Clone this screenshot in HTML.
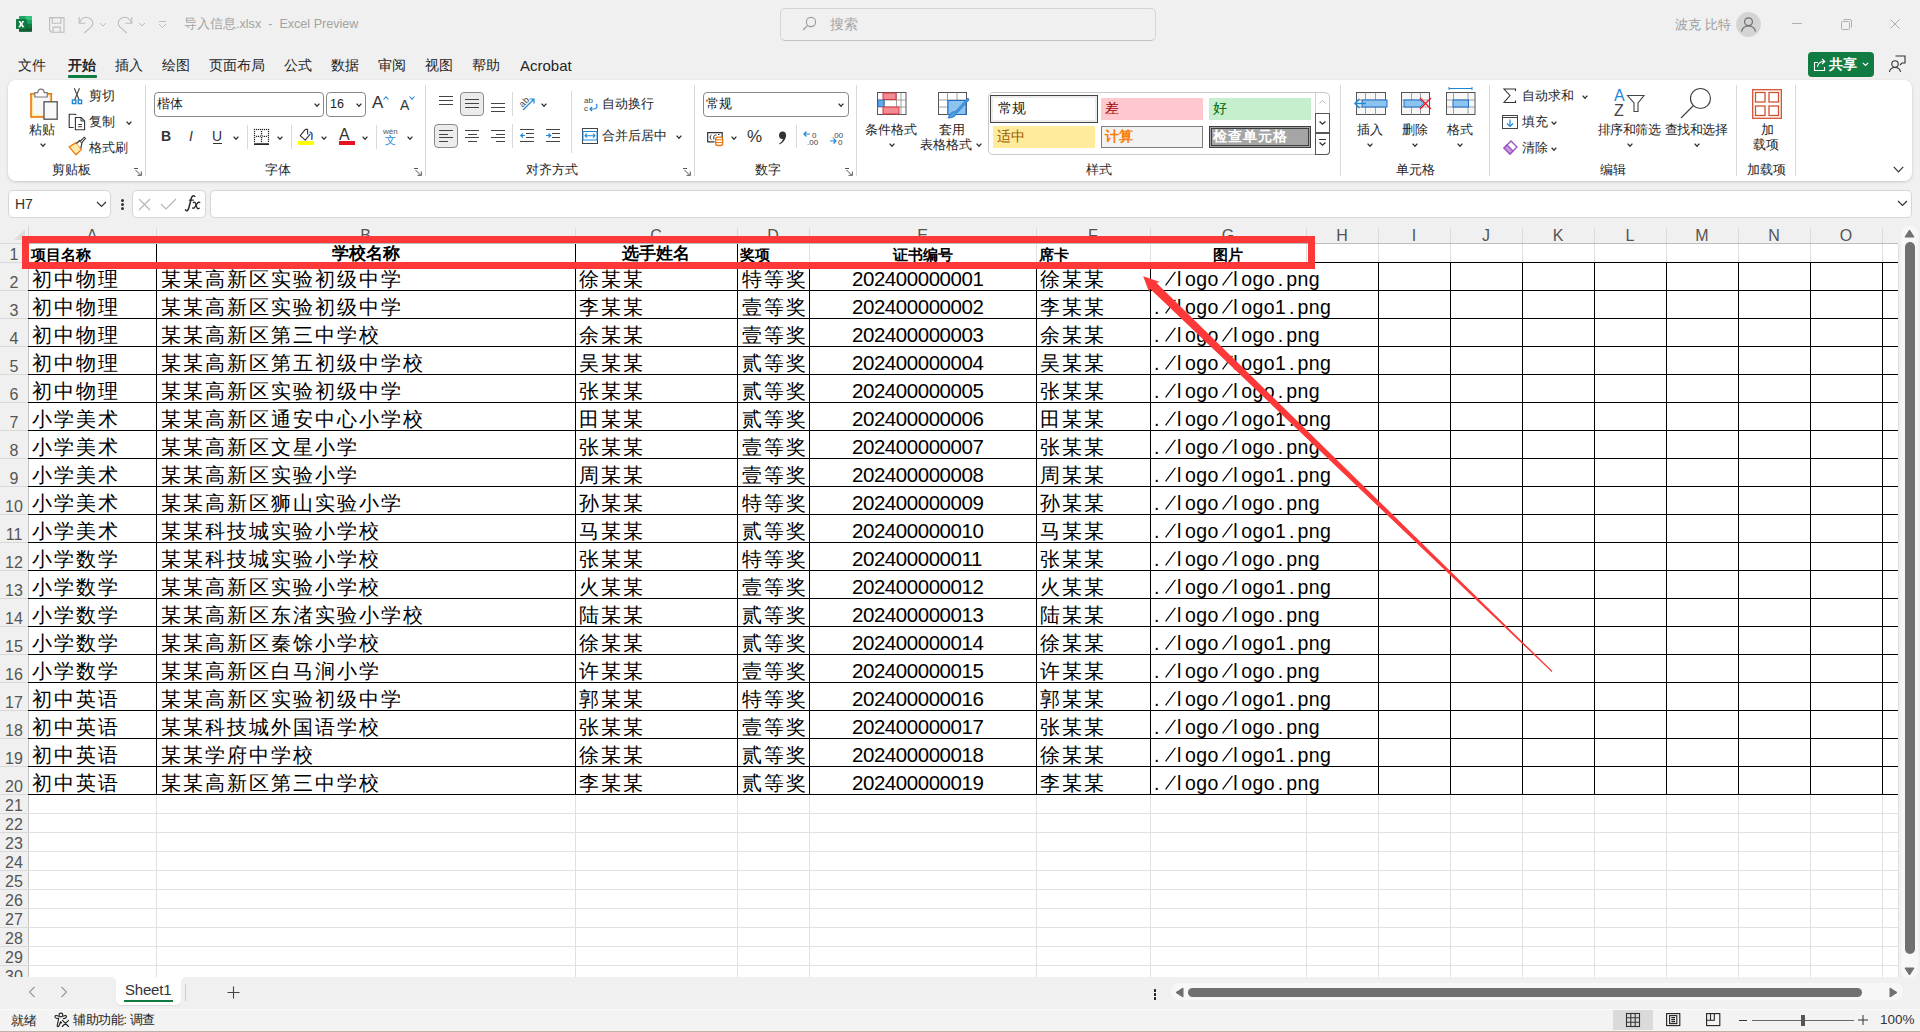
<!DOCTYPE html><html><head><meta charset="utf-8"><style>

*{box-sizing:border-box}
html,body{margin:0;padding:0}
body{width:1920px;height:1032px;overflow:hidden;background:#f0f0f0;position:relative;font-family:"Liberation Sans", sans-serif;color:#262626}
.a{position:absolute;white-space:nowrap}
.t{position:absolute;white-space:nowrap;line-height:1}
svg{position:absolute;overflow:visible}

</style></head><body>
<svg style="left:16px;top:16px" width="17" height="17" viewBox="0 0 17 17">
<rect x="3" y="0" width="13" height="15.7" rx="0.8" fill="#21a366"/>
<rect x="9.5" y="0" width="6.5" height="4" fill="#33c481"/>
<rect x="3" y="7.8" width="13" height="4" fill="#107c41"/>
<path d="M3 11.8 H16 V15 Q16 15.7 15.3 15.7 H3.8 Q3 15.7 3 15 Z" fill="#185c37"/>
<rect x="0" y="3" width="10.5" height="10" rx="0.6" fill="#107c41"/>
<rect x="10.5" y="4" width="0.8" height="9.8" fill="#0b5a2e" opacity="0.6"/>
<path d="M2.4 5 H4.4 L5.3 6.9 L6.2 5 H8.2 L6.4 8 L8.3 11.2 H6.2 L5.3 9.3 L4.3 11.2 H2.3 L4.2 8 Z" fill="#fff"/>
</svg>
<svg style="left:49px;top:17px" width="16" height="16" viewBox="0 0 16 16" fill="none" stroke="#bdbdbd" stroke-width="1.1"><path d="M0.6 0.6 H15 V15.2 H2.6 L0.6 13.2 Z"/><path d="M3.3 0.6 V6.3 H11.8 V0.6"/><path d="M4 15.2 V10.1 H11.3 V15.2"/></svg>
<svg style="left:78px;top:17px" width="17" height="17" viewBox="0 0 17 17" fill="none" stroke="#bdbdbd" stroke-width="1.1"><path d="M1.2 0 V6.3 H7.5"/><path d="M1.5 5.8 C3 2.2 5.5 0.3 8.3 0.3 C11.8 0.3 14.8 3 14.8 6.3 C14.8 7.8 14.2 8.8 13.2 9.9 L6.2 16"/></svg>
<svg style="left:99px;top:22px" width="8" height="5" viewBox="0 0 8 5" fill="none" stroke="#bdbdbd" stroke-width="1"><path d="M1 1 L4 4 L7 1"/></svg>
<svg style="left:117px;top:17px" width="17" height="17" viewBox="0 0 17 17" fill="none" stroke="#bdbdbd" stroke-width="1.1"><path d="M14.8 0 V6.3 H8.5"/><path d="M14.5 5.8 C13 2.2 10.5 0.3 7.7 0.3 C4.2 0.3 1.2 3 1.2 6.3 C1.2 7.8 1.8 8.8 2.8 9.9 L9.8 16"/></svg>
<svg style="left:138px;top:22px" width="8" height="5" viewBox="0 0 8 5" fill="none" stroke="#bdbdbd" stroke-width="1"><path d="M1 1 L4 4 L7 1"/></svg>
<svg style="left:158px;top:20px" width="9" height="9" viewBox="0 0 9 9" fill="none" stroke="#bdbdbd" stroke-width="1"><path d="M1 1.5 H8"/><path d="M1 4 L4.5 7.5 L8 4"/></svg>
<div class="t" style="left:184px;top:18px;font-size:12.6px;color:#a3a3a3">导入信息.xlsx&nbsp; - &nbsp;Excel Preview</div>
<div class="a" style="left:780px;top:8px;width:376px;height:33px;border:1px solid #d4d4d4;border-bottom-color:#c2c2c2;border-radius:5px;background:#f0f0f0"></div>
<svg style="left:802px;top:16px" width="15" height="15" viewBox="0 0 15 15" fill="none" stroke="#9a9a9a" stroke-width="1.1"><circle cx="9" cy="6" r="4.6"/><path d="M5.7 9.3 L1 14"/></svg>
<div class="t" style="left:830px;top:17px;font-size:14px;color:#a6a6a6">搜索</div>
<div class="t" style="left:1675px;top:18px;font-size:13px;color:#9d9d9d">波克 比特</div>
<svg style="left:1736px;top:12px" width="25" height="25" viewBox="0 0 25 25"><circle cx="12.5" cy="12.5" r="12.4" fill="#d4d4d4"/>
<circle cx="12.5" cy="9.8" r="3.9" fill="none" stroke="#6b6b6b" stroke-width="1.2"/><path d="M5.5 19.5 C6.5 15.5 9 14 12.5 14 C16 14 18.5 15.5 19.5 19.5" fill="none" stroke="#6b6b6b" stroke-width="1.2"/></svg>
<div class="a" style="left:1792px;top:23px;width:10px;height:1px;background:#b0b0b0"></div>
<svg style="left:1841px;top:19px" width="11" height="11" viewBox="0 0 11 11" fill="none" stroke="#b0b0b0" stroke-width="1"><rect x="0.5" y="2.5" width="8" height="8" rx="1"/><path d="M2.5 0.5 H9 Q10.5 0.5 10.5 2 V8.5"/></svg>
<svg style="left:1890px;top:19px" width="10" height="10" viewBox="0 0 10 10" fill="none" stroke="#b0b0b0" stroke-width="1"><path d="M0.5 0.5 L9.5 9.5 M9.5 0.5 L0.5 9.5"/></svg>
<div class="t" style="left:18px;top:58px;font-size:14px;font-weight:normal;color:#262626">文件</div>
<div class="t" style="left:68px;top:58px;font-size:14px;font-weight:bold;color:#262626">开始</div>
<div class="t" style="left:115px;top:58px;font-size:14px;font-weight:normal;color:#262626">插入</div>
<div class="t" style="left:162px;top:58px;font-size:14px;font-weight:normal;color:#262626">绘图</div>
<div class="t" style="left:209px;top:58px;font-size:14px;font-weight:normal;color:#262626">页面布局</div>
<div class="t" style="left:284px;top:58px;font-size:14px;font-weight:normal;color:#262626">公式</div>
<div class="t" style="left:331px;top:58px;font-size:14px;font-weight:normal;color:#262626">数据</div>
<div class="t" style="left:378px;top:58px;font-size:14px;font-weight:normal;color:#262626">审阅</div>
<div class="t" style="left:425px;top:58px;font-size:14px;font-weight:normal;color:#262626">视图</div>
<div class="t" style="left:472px;top:58px;font-size:14px;font-weight:normal;color:#262626">帮助</div>
<div class="t" style="left:520px;top:58px;font-size:15px;font-weight:normal;color:#262626">Acrobat</div>
<div class="a" style="left:68px;top:75px;width:29px;height:2.5px;background:#107c41;border-radius:1px"></div>
<div class="a" style="left:1808px;top:52px;width:66px;height:25px;background:#107c41;border-radius:4px"></div>
<svg style="left:1813px;top:57px" width="14" height="15" viewBox="0 0 14 15" fill="none" stroke="#fff" stroke-width="1.1"><path d="M5 5.5 H1.5 V13.5 H11.5 V10"/><path d="M4.5 10 C5 6.5 7.5 4.5 11 4.5"/><path d="M9 2 L11.8 4.5 L9 7"/></svg>
<div class="t" style="left:1829px;top:57px;font-size:14px;font-weight:bold;color:#fff">共享</div>
<svg style="left:1862px;top:62px" width="7" height="5" viewBox="0 0 7 5" fill="none" stroke="#fff" stroke-width="1.2"><path d="M0.8 0.8 L3.5 3.5 L6.2 0.8"/></svg>
<svg style="left:1888px;top:55px" width="18" height="18" viewBox="0 0 18 18" fill="none" stroke="#333" stroke-width="1.1"><path d="M7.5 1 H17 V8 H14 L12 10"/><circle cx="7" cy="9" r="3.2"/><path d="M1.5 17 C2 13.5 4 12.5 7 12.5 C10 12.5 12 13.5 12.5 17"/></svg>
<div class="a" style="left:8px;top:80px;width:1904px;height:101px;background:#fff;border-radius:8px;box-shadow:0 1px 3px rgba(0,0,0,0.17)"></div>
<svg style="left:24px;top:84px" width="40" height="40" viewBox="0 0 40 40">
<rect x="7" y="9.8" width="20.3" height="23.2" fill="#fdeaa6" stroke="#e8780c" stroke-width="1.6"/>
<rect x="9.3" y="12" width="15.8" height="18.8" fill="#f8f8f8"/>
<path d="M10.8 13 V8.6 H13.8 C14 6 15.5 5.2 17 5.2 C18.5 5.2 20 6 20.2 8.6 H23.2 V13 Z" fill="#fff" stroke="#777" stroke-width="1.2"/>
<rect x="20" y="17.8" width="13.2" height="17.4" fill="#f9f9f9" stroke="#505050" stroke-width="1.3"/>
</svg>
<div class="t" style="left:29px;top:123px;font-size:13px;color:#262626;">粘贴</div>
<svg style="left:40px;top:143px" width="6" height="4" viewBox="0 0 6 4" fill="none" stroke="#333" stroke-width="1.35"><path d="M0.6 0.6 L3.0 3.2 L5.4 0.6"/></svg>
<svg style="left:64px;top:84px" width="30" height="76" viewBox="0 0 30 76">
<path d="M10.3 4.2 L15.2 16 M15.5 4.2 L10.6 16" fill="none" stroke="#444" stroke-width="1.1"/>
<rect x="8.4" y="16" width="3.4" height="3.6" fill="#fff" stroke="#1e88d8" stroke-width="1.4"/>
<rect x="14.2" y="16" width="3.4" height="3.6" fill="#fff" stroke="#1e88d8" stroke-width="1.4"/>
<path d="M9.6 43.5 H5.2 V30.2 H11.4 L12.3 31.2" fill="none" stroke="#333" stroke-width="1.1"/>
<path d="M11.4 33.5 H17.2 L20.6 36.9 V45.7 H11.4 Z" fill="#fff" stroke="#333" stroke-width="1.1"/>
<path d="M17 33.5 V37 H20.6 M14.2 40.5 H18 M14.2 42.7 H18" fill="none" stroke="#333" stroke-width="1"/>
<path d="M5.2 62.8 L12.2 58.6 L17.6 65.4 L12 70.8 Z" fill="#fde9a8" stroke="#e8780c" stroke-width="1.3" stroke-linejoin="round"/>
<path d="M12.5 59.5 L15.5 56.5 L18 59 L16.8 64" fill="#fff" stroke="#333" stroke-width="1.1"/>
<path d="M16 57.5 L20.3 53.2 L21.5 54.5 L17.5 58.8" fill="#fff" stroke="#333" stroke-width="1.1"/>
</svg>
<div class="t" style="left:89px;top:89px;font-size:13px;color:#262626;">剪切</div>
<div class="t" style="left:89px;top:115px;font-size:13px;color:#262626;">复制</div>
<svg style="left:126px;top:121px" width="6" height="4" viewBox="0 0 6 4" fill="none" stroke="#333" stroke-width="1.35"><path d="M0.6 0.6 L3.0 3.2 L5.4 0.6"/></svg>
<div class="t" style="left:89px;top:141px;font-size:13px;color:#262626;">格式刷</div>
<div class="t" style="left:11px;width:120px;text-align:center;top:163px;font-size:13px;color:#262626;">剪贴板</div>
<svg style="left:134px;top:168px" width="8" height="8" viewBox="0 0 8 8" fill="none" stroke="#555" stroke-width="1"><path d="M0 0.5 H4 M1.5 2 L7 7.5 M7.3 3.5 V7.3 H3.5"/></svg>
<div class="a" style="left:145px;top:85px;width:1px;height:91px;background:#d9d9d9"></div>
<div class="a" style="left:154px;top:92px;width:170px;height:25px;border:1px solid #8a8a8a;border-radius:4px;background:#fff"></div>
<div class="t" style="left:157px;top:97px;font-size:13px;color:#262626;color:#222">楷体</div>
<svg style="left:314px;top:103px" width="6" height="4" viewBox="0 0 6 4" fill="none" stroke="#333" stroke-width="1.35"><path d="M0.6 0.6 L3.0 3.2 L5.4 0.6"/></svg>
<div class="a" style="left:326px;top:92px;width:40px;height:25px;border:1px solid #8a8a8a;border-radius:4px;background:#fff"></div>
<div class="t" style="left:330px;top:98px;font-size:13px;color:#262626;color:#222;font-size:12.5px">16</div>
<svg style="left:356px;top:103px" width="6" height="4" viewBox="0 0 6 4" fill="none" stroke="#333" stroke-width="1.35"><path d="M0.6 0.6 L3.0 3.2 L5.4 0.6"/></svg>
<div class="t" style="left:372px;top:94px;font-size:17px;color:#333">A</div>
<svg style="left:383px;top:96px" width="6" height="4" viewBox="0 0 6 4" fill="none" stroke="#1e88d8" stroke-width="1.1"><path d="M0.5 3.5 L3 0.8 L5.5 3.5"/></svg>
<div class="t" style="left:400px;top:98px;font-size:14px;color:#333">A</div>
<svg style="left:409px;top:96px" width="6" height="4" viewBox="0 0 6 4" fill="none" stroke="#1e88d8" stroke-width="1.1"><path d="M0.5 0.5 L3 3.2 L5.5 0.5"/></svg>
<div class="t" style="left:161px;top:129px;font-size:14px;font-weight:bold;color:#333">B</div>
<div class="t" style="left:189px;top:129px;font-size:14px;font-style:italic;color:#333">I</div>
<div class="t" style="left:212px;top:129px;font-size:14px;color:#333">U</div>
<div class="a" style="left:213px;top:143px;width:9px;height:1px;background:#333"></div>
<svg style="left:233px;top:136px" width="6" height="4" viewBox="0 0 6 4" fill="none" stroke="#333" stroke-width="1.35"><path d="M0.6 0.6 L3.0 3.2 L5.4 0.6"/></svg>
<div class="a" style="left:247px;top:125px;width:1px;height:24px;background:#d9d9d9"></div>
<svg style="left:250px;top:124px" width="22" height="22" viewBox="0 0 22 22"><rect x="3.9" y="4.9" width="1.2" height="1.2" fill="#222"/><rect x="5.9" y="4.9" width="1.2" height="1.2" fill="#222"/><rect x="7.9" y="4.9" width="1.2" height="1.2" fill="#222"/><rect x="9.9" y="4.9" width="1.2" height="1.2" fill="#222"/><rect x="11.9" y="4.9" width="1.2" height="1.2" fill="#222"/><rect x="13.9" y="4.9" width="1.2" height="1.2" fill="#222"/><rect x="15.9" y="4.9" width="1.2" height="1.2" fill="#222"/><rect x="17.9" y="4.9" width="1.2" height="1.2" fill="#222"/><rect x="3.9" y="6.9" width="1.2" height="1.2" fill="#222"/><rect x="17.9" y="6.9" width="1.2" height="1.2" fill="#222"/><rect x="3.9" y="8.9" width="1.2" height="1.2" fill="#222"/><rect x="17.9" y="8.9" width="1.2" height="1.2" fill="#222"/><rect x="3.9" y="10.9" width="1.2" height="1.2" fill="#222"/><rect x="17.9" y="10.9" width="1.2" height="1.2" fill="#222"/><rect x="3.9" y="12.9" width="1.2" height="1.2" fill="#222"/><rect x="17.9" y="12.9" width="1.2" height="1.2" fill="#222"/><rect x="3.9" y="14.9" width="1.2" height="1.2" fill="#222"/><rect x="17.9" y="14.9" width="1.2" height="1.2" fill="#222"/><rect x="3.9" y="16.9" width="1.2" height="1.2" fill="#222"/><rect x="17.9" y="16.9" width="1.2" height="1.2" fill="#222"/><rect x="10.9" y="6.9" width="1.2" height="1.2" fill="#222"/><rect x="10.9" y="8.9" width="1.2" height="1.2" fill="#222"/><rect x="10.9" y="12.9" width="1.2" height="1.2" fill="#222"/><rect x="10.9" y="14.9" width="1.2" height="1.2" fill="#222"/><rect x="10.9" y="16.9" width="1.2" height="1.2" fill="#222"/><rect x="5.9" y="11.8" width="1.2" height="1.2" fill="#222"/><rect x="7.9" y="11.8" width="1.2" height="1.2" fill="#222"/><rect x="13.9" y="11.8" width="1.2" height="1.2" fill="#222"/><rect x="15.9" y="11.8" width="1.2" height="1.2" fill="#222"/><path d="M11.5 10.8 L12.9 12.3 L11.5 13.7 L10.1 12.3 Z" fill="none" stroke="#222" stroke-width="0.8"/><rect x="4" y="19.3" width="15" height="1.6" fill="#111"/></svg>
<svg style="left:277px;top:136px" width="6" height="4" viewBox="0 0 6 4" fill="none" stroke="#333" stroke-width="1.35"><path d="M0.6 0.6 L3.0 3.2 L5.4 0.6"/></svg>
<div class="a" style="left:291px;top:125px;width:1px;height:24px;background:#d9d9d9"></div>
<svg style="left:298px;top:128px" width="17" height="18" viewBox="0 0 17 18"><path d="M7.4 1.4 L2.2 7.7 L7.2 12.2 L12.2 6.2 M7.4 1.4 H9.6 V6.6" fill="none" stroke="#333" stroke-width="1.1" stroke-linejoin="round"/><path d="M12.2 4.2 C13.6 4.4 14.3 6 14 8.2 L13.8 11.3" fill="none" stroke="#1e6fc8" stroke-width="1.6" stroke-linecap="round"/><rect x="0" y="13" width="16" height="4" fill="#ffff00"/></svg>
<svg style="left:321px;top:136px" width="6" height="4" viewBox="0 0 6 4" fill="none" stroke="#333" stroke-width="1.35"><path d="M0.6 0.6 L3.0 3.2 L5.4 0.6"/></svg>
<div class="t" style="left:339px;top:127px;font-size:16px;color:#333">A</div>
<div class="a" style="left:339px;top:141px;width:16px;height:4px;background:#e81123"></div>
<svg style="left:362px;top:136px" width="6" height="4" viewBox="0 0 6 4" fill="none" stroke="#333" stroke-width="1.35"><path d="M0.6 0.6 L3.0 3.2 L5.4 0.6"/></svg>
<div class="a" style="left:376px;top:125px;width:1px;height:24px;background:#d9d9d9"></div>
<div class="t" style="left:383px;top:128px;font-size:8px;color:#555">wén</div>
<div class="t" style="left:385px;top:135px;font-size:11px;color:#1e88d8">文</div>
<svg style="left:407px;top:136px" width="6" height="4" viewBox="0 0 6 4" fill="none" stroke="#333" stroke-width="1.35"><path d="M0.6 0.6 L3.0 3.2 L5.4 0.6"/></svg>
<div class="t" style="left:218px;width:120px;text-align:center;top:163px;font-size:13px;color:#262626;">字体</div>
<svg style="left:414px;top:168px" width="8" height="8" viewBox="0 0 8 8" fill="none" stroke="#555" stroke-width="1"><path d="M0 0.5 H4 M1.5 2 L7 7.5 M7.3 3.5 V7.3 H3.5"/></svg>
<div class="a" style="left:425px;top:85px;width:1px;height:91px;background:#d9d9d9"></div>
<div class="a" style="left:439px;top:96px;width:14px;height:1px;background:#444"></div>
<div class="a" style="left:439px;top:100px;width:14px;height:1px;background:#444"></div>
<div class="a" style="left:439px;top:104px;width:14px;height:1px;background:#444"></div>
<div class="a" style="left:460px;top:92px;width:24px;height:24px;background:#ececec;border:1px solid #8a8a8a;border-radius:4px"></div>
<div class="a" style="left:465px;top:99px;width:14px;height:1px;background:#444"></div>
<div class="a" style="left:465px;top:103px;width:14px;height:1px;background:#444"></div>
<div class="a" style="left:465px;top:107px;width:14px;height:1px;background:#444"></div>
<div class="a" style="left:491px;top:103px;width:14px;height:1px;background:#444"></div>
<div class="a" style="left:491px;top:107px;width:14px;height:1px;background:#444"></div>
<div class="a" style="left:491px;top:111px;width:14px;height:1px;background:#444"></div>
<div class="a" style="left:512px;top:92px;width:1px;height:24px;background:#d9d9d9"></div>
<svg style="left:519px;top:95px" width="17" height="17" viewBox="0 0 17 17"><text x="0" y="10" font-size="9" fill="#444" transform="rotate(-45 5 7)" font-family="Liberation Sans">ab</text><path d="M4 15 L15 4 M10.5 4 H15 V8.5" fill="none" stroke="#1e88d8" stroke-width="1.2"/></svg>
<svg style="left:541px;top:103px" width="6" height="4" viewBox="0 0 6 4" fill="none" stroke="#333" stroke-width="1.35"><path d="M0.6 0.6 L3.0 3.2 L5.4 0.6"/></svg>
<div class="a" style="left:571px;top:91px;width:1px;height:62px;background:#d9d9d9"></div>
<svg style="left:583px;top:96px" width="16" height="17" viewBox="0 0 16 17"><text x="1" y="7" font-size="8" fill="#444" font-family="Liberation Sans">ab</text><text x="1" y="15" font-size="8" fill="#444" font-family="Liberation Sans">c</text><path d="M13 8 C15 10 14 13 11 13 H7 M9 11 L7 13 L9 15" fill="none" stroke="#1e88d8" stroke-width="1.2"/></svg>
<div class="t" style="left:602px;top:97px;font-size:13px;color:#262626;">自动换行</div>
<div class="a" style="left:434px;top:124px;width:24px;height:24px;background:#ececec;border:1px solid #8a8a8a;border-radius:4px"></div>
<div class="a" style="left:439px;top:130.0px;width:14px;height:1px;background:#444"></div>
<div class="a" style="left:439px;top:133.7px;width:9px;height:1px;background:#444"></div>
<div class="a" style="left:439px;top:137.4px;width:14px;height:1px;background:#444"></div>
<div class="a" style="left:439px;top:141.1px;width:9px;height:1px;background:#444"></div>
<div class="a" style="left:465.0px;top:130.0px;width:14px;height:1px;background:#444"></div>
<div class="a" style="left:467.5px;top:133.7px;width:9px;height:1px;background:#444"></div>
<div class="a" style="left:465.0px;top:137.4px;width:14px;height:1px;background:#444"></div>
<div class="a" style="left:467.5px;top:141.1px;width:9px;height:1px;background:#444"></div>
<div class="a" style="left:491px;top:130.0px;width:14px;height:1px;background:#444"></div>
<div class="a" style="left:496px;top:133.7px;width:9px;height:1px;background:#444"></div>
<div class="a" style="left:491px;top:137.4px;width:14px;height:1px;background:#444"></div>
<div class="a" style="left:496px;top:141.1px;width:9px;height:1px;background:#444"></div>
<div class="a" style="left:512px;top:124px;width:1px;height:24px;background:#d9d9d9"></div>
<svg style="left:520px;top:129px" width="15" height="14" viewBox="0 0 15 14"><path d="M0 0.5 H14 M6 4.5 H14 M6 8.5 H14 M0 12.5 H14" stroke="#444" stroke-width="1"/><path d="M5 6.5 H0.8 M3 4.5 L0.8 6.5 L3 8.5" fill="none" stroke="#1e88d8" stroke-width="1.2"/></svg>
<svg style="left:546px;top:129px" width="15" height="14" viewBox="0 0 15 14"><path d="M0 0.5 H14 M6 4.5 H14 M6 8.5 H14 M0 12.5 H14" stroke="#444" stroke-width="1"/><path d="M0 6.5 H4.5 M2.5 4.5 L4.7 6.5 L2.5 8.5" fill="none" stroke="#1e88d8" stroke-width="1.2"/></svg>
<svg style="left:582px;top:128px" width="16" height="16" viewBox="0 0 16 16"><rect x="0.5" y="0.5" width="15" height="15" fill="none" stroke="#444" stroke-width="1"/><rect x="1" y="3.5" width="14" height="8.5" fill="#fff" stroke="#1e88d8" stroke-width="1"/><path d="M3 7.7 H13 M5 5.7 L3 7.7 L5 9.7 M11 5.7 L13 7.7 L11 9.7" fill="none" stroke="#1e88d8" stroke-width="1.1"/></svg>
<div class="t" style="left:602px;top:129px;font-size:13px;color:#262626;">合并后居中</div>
<svg style="left:676px;top:135px" width="6" height="4" viewBox="0 0 6 4" fill="none" stroke="#333" stroke-width="1.35"><path d="M0.6 0.6 L3.0 3.2 L5.4 0.6"/></svg>
<div class="t" style="left:492px;width:120px;text-align:center;top:163px;font-size:13px;color:#262626;">对齐方式</div>
<svg style="left:683px;top:168px" width="8" height="8" viewBox="0 0 8 8" fill="none" stroke="#555" stroke-width="1"><path d="M0 0.5 H4 M1.5 2 L7 7.5 M7.3 3.5 V7.3 H3.5"/></svg>
<div class="a" style="left:694px;top:85px;width:1px;height:91px;background:#d9d9d9"></div>
<div class="a" style="left:703px;top:92px;width:146px;height:25px;border:1px solid #8a8a8a;border-radius:4px;background:#fff"></div>
<div class="t" style="left:706px;top:97px;font-size:13px;color:#262626;color:#222">常规</div>
<svg style="left:838px;top:103px" width="6" height="4" viewBox="0 0 6 4" fill="none" stroke="#333" stroke-width="1.35"><path d="M0.6 0.6 L3.0 3.2 L5.4 0.6"/></svg>
<svg style="left:707px;top:132px" width="17" height="14" viewBox="0 0 17 14"><path d="M7.5 9.8 H0.7 V0.7 H15.2 V8" fill="none" stroke="#333" stroke-width="1.2"/><path d="M4.5 3 C2.8 3 2.6 7.5 4.5 7.5 M6.8 7.5 V4.5 C6.8 3 8.5 3 9.5 3 M11 2.5 H12.5" fill="none" stroke="#333" stroke-width="1"/><rect x="8.7" y="5.2" width="7" height="8.3" rx="2.2" fill="#fff" stroke="#e8780c" stroke-width="1.3"/><path d="M8.7 7.8 H15.7 M8.7 10.5 H15.7" stroke="#e8780c" stroke-width="1.1"/></svg>
<svg style="left:731px;top:136px" width="6" height="4" viewBox="0 0 6 4" fill="none" stroke="#333" stroke-width="1.35"><path d="M0.6 0.6 L3.0 3.2 L5.4 0.6"/></svg>
<div class="t" style="left:747px;top:128px;font-size:17px;color:#333">%</div>
<svg style="left:778px;top:131px" width="9" height="14" viewBox="0 0 9 14"><path d="M4.5 0.5 C7.5 0.5 8.5 3 8 5.5 C7.3 9 5 12 1.5 13.5 L1 12.8 C3.5 11 4.8 9.3 5 8 C2.5 8.3 1 6.7 1 4.5 C1 2 2.5 0.5 4.5 0.5 Z" fill="#333"/></svg>
<div class="a" style="left:796px;top:125px;width:1px;height:23px;background:#d9d9d9"></div>
<svg style="left:803px;top:130px" width="16" height="15" viewBox="0 0 16 15"><path d="M7 4 H1 M3.5 1.5 L1 4 L3.5 6.5" fill="none" stroke="#1e88d8" stroke-width="1.2"/><text x="9" y="7.5" font-size="8" fill="#444" font-family="Liberation Sans">0</text><text x="4" y="14.5" font-size="8" fill="#444" font-family="Liberation Sans">.00</text></svg>
<svg style="left:829px;top:130px" width="16" height="15" viewBox="0 0 16 15"><text x="3" y="7.5" font-size="8" fill="#444" font-family="Liberation Sans">.00</text><path d="M1 11 H7 M4.5 8.5 L7 11 L4.5 13.5" fill="none" stroke="#1e88d8" stroke-width="1.2"/><text x="9" y="14.5" font-size="8" fill="#444" font-family="Liberation Sans">0</text></svg>
<div class="t" style="left:708px;width:120px;text-align:center;top:163px;font-size:13px;color:#262626;">数字</div>
<svg style="left:845px;top:168px" width="8" height="8" viewBox="0 0 8 8" fill="none" stroke="#555" stroke-width="1"><path d="M0 0.5 H4 M1.5 2 L7 7.5 M7.3 3.5 V7.3 H3.5"/></svg>
<div class="a" style="left:856px;top:85px;width:1px;height:91px;background:#d9d9d9"></div>
<svg style="left:877px;top:92px" width="30" height="24" viewBox="0 0 30 24"><rect x="0.5" y="0.5" width="28.5" height="22" fill="#fff" stroke="#555"/>
<path d="M7.5 0.5 V23 M19.5 0.5 V23 M24 0.5 V23 M0.5 8 H29 M0.5 15 H29" stroke="#888" stroke-width="0.8"/>
<rect x="6" y="1" width="13" height="6.5" fill="#f38b95" stroke="#d9343f"/><rect x="1" y="8" width="6" height="6.5" fill="#62a8e6" stroke="#1e6fc8" stroke-width="0.8"/><rect x="6" y="15" width="16" height="7" fill="#f38b95" stroke="#d9343f"/></svg>
<div class="t" style="left:831px;width:120px;text-align:center;top:123px;font-size:13px;color:#262626;">条件格式</div>
<svg style="left:889px;top:143px" width="6" height="4" viewBox="0 0 6 4" fill="none" stroke="#333" stroke-width="1.35"><path d="M0.6 0.6 L3.0 3.2 L5.4 0.6"/></svg>
<svg style="left:938px;top:92px" width="32" height="28" viewBox="0 0 32 28"><rect x="0.5" y="0.5" width="28" height="22" fill="#fff" stroke="#555"/>
<path d="M9.5 0.5 V23 M19 0.5 V23 M0.5 8 H29 M0.5 15 H29" stroke="#888" stroke-width="0.8"/>
<rect x="10" y="8.5" width="18" height="14" fill="#8cc4f0" stroke="#1e6fc8"/>
<path d="M30 6 L17 20 C15 19 12 21 10 26 C15 26 18 24 18 22 L31 8 Z" fill="#4a9ee0" stroke="#1e6fc8" stroke-width="0.8"/></svg>
<div class="t" style="left:892px;width:120px;text-align:center;top:123px;font-size:13px;color:#262626;">套用</div>
<div class="t" style="left:886px;width:120px;text-align:center;top:138px;font-size:13px;color:#262626;">表格格式</div>
<svg style="left:976px;top:143px" width="6" height="4" viewBox="0 0 6 4" fill="none" stroke="#333" stroke-width="1.35"><path d="M0.6 0.6 L3.0 3.2 L5.4 0.6"/></svg>
<div class="a" style="left:988px;top:92px;width:342px;height:63px;border:1px solid #c8c8c8;border-radius:5px;background:#fff"></div>
<div class="a" style="left:990px;top:95px;width:108px;height:28px;border:1px solid #444;box-shadow:inset 0 0 0 2px #ececec;background:#fff"></div>
<div class="t" style="left:998px;top:101px;font-size:14px;color:#222">常规</div>
<div class="a" style="left:1101px;top:98px;width:102px;height:22px;background:#ffc7ce"></div>
<div class="t" style="left:1105px;top:101px;font-size:14px;color:#9c0006">差</div>
<div class="a" style="left:1209px;top:98px;width:102px;height:22px;background:#c6efce"></div>
<div class="t" style="left:1213px;top:101px;font-size:14px;color:#006100">好</div>
<div class="a" style="left:993px;top:126px;width:102px;height:22px;background:#ffeb9c"></div>
<div class="t" style="left:997px;top:129px;font-size:14px;color:#9c5700">适中</div>
<div class="a" style="left:1101px;top:126px;width:102px;height:22px;background:#f2f2f2;border:1px solid #7f7f7f"></div>
<div class="t" style="left:1105px;top:129px;font-size:14px;font-weight:bold;color:#fa7d00">计算</div>
<div class="a" style="left:1209px;top:126px;width:102px;height:22px;background:#a5a5a5;border:3px double #3f3f3f"></div>
<div class="t" style="left:1213px;top:129px;font-size:14px;font-weight:bold;color:#fff;letter-spacing:1px">检查单元格</div>
<div class="a" style="left:1315px;top:92px;width:1px;height:21px;background:#d0d0d0"></div>
<div class="a" style="left:1315px;top:113px;width:15px;height:20px;border:1px solid #555;background:#fff"></div>
<div class="a" style="left:1315px;top:132px;width:15px;height:23px;border:1px solid #555;border-top-width:2px;border-radius:0 0 4px 0;background:#fff"></div>
<svg style="left:1319px;top:100px" width="7" height="4" viewBox="0 0 7 4" fill="none" stroke="#bbb" stroke-width="1"><path d="M0.5 3.5 L3.5 0.5 L6.5 3.5"/></svg>
<svg style="left:1319px;top:121px" width="7" height="4" viewBox="0 0 7 4" fill="none" stroke="#333" stroke-width="1.35"><path d="M0.6 0.6 L3.5 3.2 L6.4 0.6"/></svg>
<div class="a" style="left:1319px;top:139px;width:7px;height:1px;background:#333"></div>
<svg style="left:1319px;top:142px" width="7" height="4" viewBox="0 0 7 4" fill="none" stroke="#333" stroke-width="1.35"><path d="M0.6 0.6 L3.5 3.2 L6.4 0.6"/></svg>
<div class="t" style="left:1039px;width:120px;text-align:center;top:163px;font-size:13px;color:#262626;">样式</div>
<div class="a" style="left:1340px;top:85px;width:1px;height:91px;background:#d9d9d9"></div>
<svg style="left:1354px;top:92px" width="34" height="24" viewBox="0 0 34 24"><rect x="2.5" y="0.5" width="29" height="22" fill="#f7f7f7" stroke="#555"/>
<path d="M11.5 0.5 V23 M21.5 0.5 V23 M2.5 8 H32 M2.5 15 H32" stroke="#888" stroke-width="0.8"/>
<rect x="8" y="8" width="25" height="7" fill="#8cc4f0" stroke="#1e6fc8"/><path d="M12 11.5 H1 M5.5 7 L1 11.5 L5.5 16" fill="none" stroke="#1e88d8" stroke-width="1.5"/></svg>
<div class="t" style="left:1310px;width:120px;text-align:center;top:123px;font-size:13px;color:#262626;">插入</div>
<svg style="left:1367px;top:143px" width="6" height="4" viewBox="0 0 6 4" fill="none" stroke="#333" stroke-width="1.35"><path d="M0.6 0.6 L3.0 3.2 L5.4 0.6"/></svg>
<svg style="left:1401px;top:92px" width="31" height="24" viewBox="0 0 31 24"><rect x="0.5" y="0.5" width="28" height="22" fill="#f7f7f7" stroke="#555"/>
<path d="M10.5 0.5 V23 M19.5 0.5 V23 M0.5 8 H29 M0.5 15 H29" stroke="#888" stroke-width="0.8"/>
<path d="M3 8 H19 L23 11.5 L19 15 H3 Z" fill="#8cc4f0" stroke="#1e6fc8"/><path d="M19 6 L30 17 M30 6 L19 17" stroke="#e81123" stroke-width="1.2"/></svg>
<div class="t" style="left:1355px;width:120px;text-align:center;top:123px;font-size:13px;color:#262626;">删除</div>
<svg style="left:1412px;top:143px" width="6" height="4" viewBox="0 0 6 4" fill="none" stroke="#333" stroke-width="1.35"><path d="M0.6 0.6 L3.0 3.2 L5.4 0.6"/></svg>
<svg style="left:1446px;top:87px" width="30" height="29" viewBox="0 0 30 29"><path d="M3 1.5 H26 M3 0 V3 M26 0 V3" stroke="#1e88d8" stroke-width="1"/>
<rect x="0.5" y="5.5" width="28.5" height="22" fill="#f7f7f7" stroke="#555"/>
<path d="M7.5 5.5 V28 M22 5.5 V28 M0.5 13 H29 M0.5 20 H29" stroke="#888" stroke-width="0.8"/>
<rect x="7" y="13" width="15.5" height="7" fill="#8cc4f0" stroke="#1e6fc8"/></svg>
<div class="t" style="left:1400px;width:120px;text-align:center;top:123px;font-size:13px;color:#262626;">格式</div>
<svg style="left:1457px;top:143px" width="6" height="4" viewBox="0 0 6 4" fill="none" stroke="#333" stroke-width="1.35"><path d="M0.6 0.6 L3.0 3.2 L5.4 0.6"/></svg>
<div class="t" style="left:1355px;width:120px;text-align:center;top:163px;font-size:13px;color:#262626;">单元格</div>
<div class="a" style="left:1489px;top:85px;width:1px;height:91px;background:#d9d9d9"></div>
<svg style="left:1503px;top:88px" width="14" height="16" viewBox="0 0 14 16" fill="none" stroke="#333" stroke-width="1.1"><path d="M12.5 3 V1 H1 L7 7.5 L1 14.5 H12.5 V12.5"/></svg>
<div class="t" style="left:1522px;top:89px;font-size:13px;color:#262626;">自动求和</div>
<svg style="left:1582px;top:95px" width="6" height="4" viewBox="0 0 6 4" fill="none" stroke="#333" stroke-width="1.35"><path d="M0.6 0.6 L3.0 3.2 L5.4 0.6"/></svg>
<svg style="left:1502px;top:115px" width="17" height="14" viewBox="0 0 17 14"><rect x="0.5" y="0.5" width="15" height="13" fill="none" stroke="#444"/><path d="M0.5 2.5 H15.5" stroke="#444"/><path d="M8 4.5 V11 M5 8.5 L8 11.5 L11 8.5" fill="none" stroke="#1e88d8" stroke-width="1.2"/></svg>
<div class="t" style="left:1522px;top:115px;font-size:13px;color:#262626;">填充</div>
<svg style="left:1551px;top:121px" width="6" height="4" viewBox="0 0 6 4" fill="none" stroke="#333" stroke-width="1.35"><path d="M0.6 0.6 L3.0 3.2 L5.4 0.6"/></svg>
<svg style="left:1502px;top:140px" width="16" height="16" viewBox="0 0 16 16"><path d="M9 1 L15 7 L8 14 L2 8 Z" fill="#fff" stroke="#9b4fc1" stroke-width="1.3"/><path d="M2 8 L5 5 L11 11 L8 14 Z" fill="#c99ae0" stroke="#9b4fc1" stroke-width="1.3"/></svg>
<div class="t" style="left:1522px;top:141px;font-size:13px;color:#262626;">清除</div>
<svg style="left:1551px;top:147px" width="6" height="4" viewBox="0 0 6 4" fill="none" stroke="#333" stroke-width="1.35"><path d="M0.6 0.6 L3.0 3.2 L5.4 0.6"/></svg>
<div class="t" style="left:1614px;top:88px;font-size:16px;color:#1e88d8">A</div>
<div class="t" style="left:1614px;top:103px;font-size:16px;color:#444">Z</div>
<svg style="left:1627px;top:95px" width="18" height="18" viewBox="0 0 18 18"><path d="M0.5 0.5 H17 L11 8 V16.5 H7 V8 Z" fill="#fff" stroke="#444" stroke-width="1.1"/></svg>
<div class="t" style="left:1569px;width:120px;text-align:center;top:123px;font-size:13px;color:#262626;letter-spacing:-0.5px">排序和筛选</div>
<svg style="left:1627px;top:143px" width="6" height="4" viewBox="0 0 6 4" fill="none" stroke="#333" stroke-width="1.35"><path d="M0.6 0.6 L3.0 3.2 L5.4 0.6"/></svg>
<svg style="left:1680px;top:88px" width="32" height="31" viewBox="0 0 32 31" fill="none" stroke="#444" stroke-width="1.2"><circle cx="20.5" cy="10.5" r="10"/><path d="M13.5 17.5 L1 30"/></svg>
<div class="t" style="left:1636px;width:120px;text-align:center;top:123px;font-size:13px;color:#262626;letter-spacing:-0.5px">查找和选择</div>
<svg style="left:1694px;top:143px" width="6" height="4" viewBox="0 0 6 4" fill="none" stroke="#333" stroke-width="1.35"><path d="M0.6 0.6 L3.0 3.2 L5.4 0.6"/></svg>
<div class="t" style="left:1553px;width:120px;text-align:center;top:163px;font-size:13px;color:#262626;">编辑</div>
<div class="a" style="left:1736px;top:85px;width:1px;height:91px;background:#d9d9d9"></div>
<svg style="left:1752px;top:89px" width="30" height="30" viewBox="0 0 30 30" fill="none" stroke="#d35230" stroke-width="1.3"><rect x="0.7" y="0.7" width="28.6" height="28.6"/><rect x="3.5" y="3.5" width="9.5" height="9.5"/><rect x="17" y="3.5" width="9.5" height="9.5"/><rect x="3.5" y="17" width="9.5" height="9.5"/><rect x="17" y="17" width="9.5" height="9.5"/></svg>
<div class="t" style="left:1707px;width:120px;text-align:center;top:123px;font-size:13px;color:#262626;">加</div>
<div class="t" style="left:1706px;width:120px;text-align:center;top:138px;font-size:13px;color:#262626;">载项</div>
<div class="t" style="left:1706px;width:120px;text-align:center;top:163px;font-size:13px;color:#262626;">加载项</div>
<div class="a" style="left:1795px;top:85px;width:1px;height:91px;background:#d9d9d9"></div>
<svg style="left:1893px;top:166px" width="11" height="7" viewBox="0 0 11 7" fill="none" stroke="#333" stroke-width="1.2"><path d="M0.8 0.8 L5.5 5.8 L10.2 0.8"/></svg>
<div class="a" style="left:8px;top:190px;width:103px;height:28px;background:#fff;border:1px solid #d6d6d6;border-radius:5px"></div>
<div class="t" style="left:15px;top:197px;font-size:14px;color:#333">H7</div>
<svg style="left:96px;top:201px" width="11" height="7" viewBox="0 0 11 7" fill="none" stroke="#333" stroke-width="1.2"><path d="M1 1 L5.5 5.5 L10 1"/></svg>
<div class="a" style="left:121px;top:199px;width:3px;height:3px;border-radius:50%;background:#333"></div>
<div class="a" style="left:121px;top:203px;width:3px;height:3px;border-radius:50%;background:#333"></div>
<div class="a" style="left:121px;top:207px;width:3px;height:3px;border-radius:50%;background:#333"></div>
<div class="a" style="left:132px;top:190px;width:74px;height:28px;background:#fff;border:1px solid #d6d6d6;border-radius:5px"></div>
<svg style="left:138px;top:198px" width="13" height="13" viewBox="0 0 13 13" fill="none" stroke="#b5b5b5" stroke-width="1.1"><path d="M1 1 L12 12 M12 1 L1 12"/></svg>
<svg style="left:160px;top:198px" width="17" height="12" viewBox="0 0 17 12" fill="none" stroke="#b5b5b5" stroke-width="1.1"><path d="M1 6 L6 11 L16 1"/></svg>
<svg style="left:183px;top:194px" width="20" height="20" viewBox="0 0 20 20" fill="none" stroke="#2a2a2a" stroke-linecap="round"><path d="M2.5 15.8 C3.6 17.6 5.2 16.5 5.8 14 L8.4 4 C9 1.8 10.5 1.3 11.8 2.3" stroke-width="1.5"/><path d="M6.4 6.2 H10.3" stroke-width="1.2"/><path d="M10.4 8.6 C11.4 7.7 12.3 8.3 12.7 9.6 L13.9 13.6 C14.3 14.8 15.2 15 16.2 14.2" stroke-width="1.4"/><path d="M16.7 8.5 C15.8 7.8 14.9 8.4 13.6 10.3 L11.9 13 C11.2 14.3 10.3 14.6 9.6 14" stroke-width="1.4"/></svg>
<div class="a" style="left:210px;top:190px;width:1702px;height:28px;background:#fff;border:1px solid #d6d6d6;border-radius:5px"></div>
<svg style="left:1897px;top:200px" width="11" height="7" viewBox="0 0 11 7" fill="none" stroke="#333" stroke-width="1.2"><path d="M1 1 L5.5 5.5 L10 1"/></svg>
<div class="a" style="left:28px;top:244px;width:1870px;height:733px;background:#fff"></div>
<svg style="left:0;top:0" width="1920" height="1032" viewBox="0 0 1920 1032"><rect x="156" y="228" width="1" height="15" fill="#dadada"/><rect x="575" y="228" width="1" height="15" fill="#dadada"/><rect x="737" y="228" width="1" height="15" fill="#dadada"/><rect x="809" y="228" width="1" height="15" fill="#dadada"/><rect x="1036" y="228" width="1" height="15" fill="#dadada"/><rect x="1150" y="228" width="1" height="15" fill="#dadada"/><rect x="1306" y="228" width="1" height="15" fill="#dadada"/><rect x="1378" y="228" width="1" height="15" fill="#dadada"/><rect x="1450" y="228" width="1" height="15" fill="#dadada"/><rect x="1522" y="228" width="1" height="15" fill="#dadada"/><rect x="1594" y="228" width="1" height="15" fill="#dadada"/><rect x="1666" y="228" width="1" height="15" fill="#dadada"/><rect x="1738" y="228" width="1" height="15" fill="#dadada"/><rect x="1810" y="228" width="1" height="15" fill="#dadada"/><rect x="1882" y="228" width="1" height="15" fill="#dadada"/><path d="M25 229 L25 240 L14 240 Z" fill="#dcdcdc"/><rect x="28" y="243" width="1870" height="1" fill="#bdbdbd"/><rect x="0" y="243" width="28" height="1" fill="#d9d9d9"/><rect x="28" y="226" width="1" height="18" fill="#d6d6d6"/><rect x="28" y="244" width="1" height="733" fill="#c4c4c4"/><rect x="156" y="244" width="1" height="733" fill="#e1e1e1"/><rect x="575" y="244" width="1" height="733" fill="#e1e1e1"/><rect x="737" y="244" width="1" height="733" fill="#e1e1e1"/><rect x="809" y="244" width="1" height="733" fill="#e1e1e1"/><rect x="1036" y="244" width="1" height="733" fill="#e1e1e1"/><rect x="1150" y="244" width="1" height="733" fill="#e1e1e1"/><rect x="1306" y="244" width="1" height="18" fill="#e1e1e1"/><rect x="1306" y="794" width="1" height="183" fill="#e1e1e1"/><rect x="1378" y="244" width="1" height="733" fill="#e1e1e1"/><rect x="1450" y="244" width="1" height="733" fill="#e1e1e1"/><rect x="1522" y="244" width="1" height="733" fill="#e1e1e1"/><rect x="1594" y="244" width="1" height="733" fill="#e1e1e1"/><rect x="1666" y="244" width="1" height="733" fill="#e1e1e1"/><rect x="1738" y="244" width="1" height="733" fill="#e1e1e1"/><rect x="1810" y="244" width="1" height="733" fill="#e1e1e1"/><rect x="1882" y="244" width="1" height="733" fill="#e1e1e1"/><rect x="1898" y="244" width="1" height="733" fill="#e1e1e1"/><rect x="0" y="262" width="1898" height="1" fill="#e1e1e1"/><rect x="0" y="290" width="1898" height="1" fill="#e1e1e1"/><rect x="0" y="318" width="1898" height="1" fill="#e1e1e1"/><rect x="0" y="346" width="1898" height="1" fill="#e1e1e1"/><rect x="0" y="374" width="1898" height="1" fill="#e1e1e1"/><rect x="0" y="402" width="1898" height="1" fill="#e1e1e1"/><rect x="0" y="430" width="1898" height="1" fill="#e1e1e1"/><rect x="0" y="458" width="1898" height="1" fill="#e1e1e1"/><rect x="0" y="486" width="1898" height="1" fill="#e1e1e1"/><rect x="0" y="514" width="1898" height="1" fill="#e1e1e1"/><rect x="0" y="542" width="1898" height="1" fill="#e1e1e1"/><rect x="0" y="570" width="1898" height="1" fill="#e1e1e1"/><rect x="0" y="598" width="1898" height="1" fill="#e1e1e1"/><rect x="0" y="626" width="1898" height="1" fill="#e1e1e1"/><rect x="0" y="654" width="1898" height="1" fill="#e1e1e1"/><rect x="0" y="682" width="1898" height="1" fill="#e1e1e1"/><rect x="0" y="710" width="1898" height="1" fill="#e1e1e1"/><rect x="0" y="738" width="1898" height="1" fill="#e1e1e1"/><rect x="0" y="766" width="1898" height="1" fill="#e1e1e1"/><rect x="0" y="794" width="1898" height="1" fill="#e1e1e1"/><rect x="0" y="813" width="1898" height="1" fill="#e1e1e1"/><rect x="0" y="832" width="1898" height="1" fill="#e1e1e1"/><rect x="0" y="851" width="1898" height="1" fill="#e1e1e1"/><rect x="0" y="870" width="1898" height="1" fill="#e1e1e1"/><rect x="0" y="889" width="1898" height="1" fill="#e1e1e1"/><rect x="0" y="908" width="1898" height="1" fill="#e1e1e1"/><rect x="0" y="927" width="1898" height="1" fill="#e1e1e1"/><rect x="0" y="946" width="1898" height="1" fill="#e1e1e1"/><rect x="0" y="965" width="1898" height="1" fill="#e1e1e1"/><rect x="0" y="262" width="28" height="1" fill="#d9d9d9"/><rect x="0" y="290" width="28" height="1" fill="#d9d9d9"/><rect x="0" y="318" width="28" height="1" fill="#d9d9d9"/><rect x="0" y="346" width="28" height="1" fill="#d9d9d9"/><rect x="0" y="374" width="28" height="1" fill="#d9d9d9"/><rect x="0" y="402" width="28" height="1" fill="#d9d9d9"/><rect x="0" y="430" width="28" height="1" fill="#d9d9d9"/><rect x="0" y="458" width="28" height="1" fill="#d9d9d9"/><rect x="0" y="486" width="28" height="1" fill="#d9d9d9"/><rect x="0" y="514" width="28" height="1" fill="#d9d9d9"/><rect x="0" y="542" width="28" height="1" fill="#d9d9d9"/><rect x="0" y="570" width="28" height="1" fill="#d9d9d9"/><rect x="0" y="598" width="28" height="1" fill="#d9d9d9"/><rect x="0" y="626" width="28" height="1" fill="#d9d9d9"/><rect x="0" y="654" width="28" height="1" fill="#d9d9d9"/><rect x="0" y="682" width="28" height="1" fill="#d9d9d9"/><rect x="0" y="710" width="28" height="1" fill="#d9d9d9"/><rect x="0" y="738" width="28" height="1" fill="#d9d9d9"/><rect x="0" y="766" width="28" height="1" fill="#d9d9d9"/><rect x="0" y="794" width="28" height="1" fill="#d9d9d9"/><rect x="0" y="813" width="28" height="1" fill="#d9d9d9"/><rect x="0" y="832" width="28" height="1" fill="#d9d9d9"/><rect x="0" y="851" width="28" height="1" fill="#d9d9d9"/><rect x="0" y="870" width="28" height="1" fill="#d9d9d9"/><rect x="0" y="889" width="28" height="1" fill="#d9d9d9"/><rect x="0" y="908" width="28" height="1" fill="#d9d9d9"/><rect x="0" y="927" width="28" height="1" fill="#d9d9d9"/><rect x="0" y="946" width="28" height="1" fill="#d9d9d9"/><rect x="0" y="965" width="28" height="1" fill="#d9d9d9"/><rect x="28" y="262" width="1870" height="1" fill="#000"/><rect x="28" y="290" width="1870" height="1" fill="#000"/><rect x="28" y="318" width="1870" height="1" fill="#000"/><rect x="28" y="346" width="1870" height="1" fill="#000"/><rect x="28" y="374" width="1870" height="1" fill="#000"/><rect x="28" y="402" width="1870" height="1" fill="#000"/><rect x="28" y="430" width="1870" height="1" fill="#000"/><rect x="28" y="458" width="1870" height="1" fill="#000"/><rect x="28" y="486" width="1870" height="1" fill="#000"/><rect x="28" y="514" width="1870" height="1" fill="#000"/><rect x="28" y="542" width="1870" height="1" fill="#000"/><rect x="28" y="570" width="1870" height="1" fill="#000"/><rect x="28" y="598" width="1870" height="1" fill="#000"/><rect x="28" y="626" width="1870" height="1" fill="#000"/><rect x="28" y="654" width="1870" height="1" fill="#000"/><rect x="28" y="682" width="1870" height="1" fill="#000"/><rect x="28" y="710" width="1870" height="1" fill="#000"/><rect x="28" y="738" width="1870" height="1" fill="#000"/><rect x="28" y="766" width="1870" height="1" fill="#000"/><rect x="28" y="794" width="1870" height="1" fill="#000"/><rect x="156" y="262" width="1" height="533" fill="#000"/><rect x="575" y="262" width="1" height="533" fill="#000"/><rect x="737" y="262" width="1" height="533" fill="#000"/><rect x="809" y="262" width="1" height="533" fill="#000"/><rect x="1036" y="262" width="1" height="533" fill="#000"/><rect x="1150" y="262" width="1" height="533" fill="#000"/><rect x="1378" y="262" width="1" height="533" fill="#000"/><rect x="1450" y="262" width="1" height="533" fill="#000"/><rect x="1522" y="262" width="1" height="533" fill="#000"/><rect x="1594" y="262" width="1" height="533" fill="#000"/><rect x="1666" y="262" width="1" height="533" fill="#000"/><rect x="1738" y="262" width="1" height="533" fill="#000"/><rect x="1810" y="262" width="1" height="533" fill="#000"/><rect x="1882" y="262" width="1" height="533" fill="#000"/><rect x="156" y="244" width="1" height="18" fill="#000"/><rect x="575" y="244" width="1" height="18" fill="#000"/><rect x="737" y="244" width="1" height="18" fill="#000"/></svg>
<div class="t" style="left:72.0px;width:40px;text-align:center;top:228px;font-size:16px;color:#555">A</div>
<div class="t" style="left:345.5px;width:40px;text-align:center;top:228px;font-size:16px;color:#555">B</div>
<div class="t" style="left:636.0px;width:40px;text-align:center;top:228px;font-size:16px;color:#555">C</div>
<div class="t" style="left:753.0px;width:40px;text-align:center;top:228px;font-size:16px;color:#555">D</div>
<div class="t" style="left:902.5px;width:40px;text-align:center;top:228px;font-size:16px;color:#555">E</div>
<div class="t" style="left:1073.0px;width:40px;text-align:center;top:228px;font-size:16px;color:#555">F</div>
<div class="t" style="left:1208.0px;width:40px;text-align:center;top:228px;font-size:16px;color:#555">G</div>
<div class="t" style="left:1322.0px;width:40px;text-align:center;top:228px;font-size:16px;color:#555">H</div>
<div class="t" style="left:1394.0px;width:40px;text-align:center;top:228px;font-size:16px;color:#555">I</div>
<div class="t" style="left:1466.0px;width:40px;text-align:center;top:228px;font-size:16px;color:#555">J</div>
<div class="t" style="left:1538.0px;width:40px;text-align:center;top:228px;font-size:16px;color:#555">K</div>
<div class="t" style="left:1610.0px;width:40px;text-align:center;top:228px;font-size:16px;color:#555">L</div>
<div class="t" style="left:1682.0px;width:40px;text-align:center;top:228px;font-size:16px;color:#555">M</div>
<div class="t" style="left:1754.0px;width:40px;text-align:center;top:228px;font-size:16px;color:#555">N</div>
<div class="t" style="left:1826.0px;width:40px;text-align:center;top:228px;font-size:16px;color:#555">O</div>
<div class="a" style="left:0;top:244px;width:28px;height:733px;overflow:hidden">
<div class="t" style="left:0;width:28px;text-align:center;top:3px;font-size:16px;color:#555">1</div>
<div class="t" style="left:0;width:28px;text-align:center;top:31px;font-size:16px;color:#555">2</div>
<div class="t" style="left:0;width:28px;text-align:center;top:59px;font-size:16px;color:#555">3</div>
<div class="t" style="left:0;width:28px;text-align:center;top:87px;font-size:16px;color:#555">4</div>
<div class="t" style="left:0;width:28px;text-align:center;top:115px;font-size:16px;color:#555">5</div>
<div class="t" style="left:0;width:28px;text-align:center;top:143px;font-size:16px;color:#555">6</div>
<div class="t" style="left:0;width:28px;text-align:center;top:171px;font-size:16px;color:#555">7</div>
<div class="t" style="left:0;width:28px;text-align:center;top:199px;font-size:16px;color:#555">8</div>
<div class="t" style="left:0;width:28px;text-align:center;top:227px;font-size:16px;color:#555">9</div>
<div class="t" style="left:0;width:28px;text-align:center;top:255px;font-size:16px;color:#555">10</div>
<div class="t" style="left:0;width:28px;text-align:center;top:283px;font-size:16px;color:#555">11</div>
<div class="t" style="left:0;width:28px;text-align:center;top:311px;font-size:16px;color:#555">12</div>
<div class="t" style="left:0;width:28px;text-align:center;top:339px;font-size:16px;color:#555">13</div>
<div class="t" style="left:0;width:28px;text-align:center;top:367px;font-size:16px;color:#555">14</div>
<div class="t" style="left:0;width:28px;text-align:center;top:395px;font-size:16px;color:#555">15</div>
<div class="t" style="left:0;width:28px;text-align:center;top:423px;font-size:16px;color:#555">16</div>
<div class="t" style="left:0;width:28px;text-align:center;top:451px;font-size:16px;color:#555">17</div>
<div class="t" style="left:0;width:28px;text-align:center;top:479px;font-size:16px;color:#555">18</div>
<div class="t" style="left:0;width:28px;text-align:center;top:507px;font-size:16px;color:#555">19</div>
<div class="t" style="left:0;width:28px;text-align:center;top:535px;font-size:16px;color:#555">20</div>
<div class="t" style="left:0;width:28px;text-align:center;top:554px;font-size:16px;color:#555">21</div>
<div class="t" style="left:0;width:28px;text-align:center;top:573px;font-size:16px;color:#555">22</div>
<div class="t" style="left:0;width:28px;text-align:center;top:592px;font-size:16px;color:#555">23</div>
<div class="t" style="left:0;width:28px;text-align:center;top:611px;font-size:16px;color:#555">24</div>
<div class="t" style="left:0;width:28px;text-align:center;top:630px;font-size:16px;color:#555">25</div>
<div class="t" style="left:0;width:28px;text-align:center;top:649px;font-size:16px;color:#555">26</div>
<div class="t" style="left:0;width:28px;text-align:center;top:668px;font-size:16px;color:#555">27</div>
<div class="t" style="left:0;width:28px;text-align:center;top:687px;font-size:16px;color:#555">28</div>
<div class="t" style="left:0;width:28px;text-align:center;top:706px;font-size:16px;color:#555">29</div>
<div class="t" style="left:0;width:28px;text-align:center;top:725px;font-size:16px;color:#555">30</div>
</div>
<div class="t" style="left:31px;top:247px;font-size:15px;font-weight:bold;color:#000">项目名称</div>
<div class="t" style="left:265.5px;width:200px;text-align:center;top:245px;font-size:17px;font-weight:bold;color:#000">学校名称</div>
<div class="t" style="left:556.0px;width:200px;text-align:center;top:245px;font-size:17px;font-weight:bold;color:#000">选手姓名</div>
<div class="t" style="left:740px;top:247px;font-size:15px;font-weight:bold;color:#000">奖项</div>
<div class="t" style="left:822.5px;width:200px;text-align:center;top:247px;font-size:15px;font-weight:bold;color:#000">证书编号</div>
<div class="t" style="left:1039px;top:247px;font-size:15px;font-weight:bold;color:#000">席卡</div>
<div class="t" style="left:1128.0px;width:200px;text-align:center;top:247px;font-size:15px;font-weight:bold;color:#000">图片</div>
<div class="t" style="left:32px;top:269px;font-size:20px;letter-spacing:2px;color:#000">初中物理</div>
<div class="t" style="left:161px;top:269px;font-size:20px;letter-spacing:2px;color:#000">某某高新区实验初级中学</div>
<div class="t" style="left:579px;top:269px;font-size:20px;letter-spacing:2px;color:#000">徐某某</div>
<div class="t" style="left:742px;top:269px;font-size:20px;letter-spacing:2px;color:#000">特等奖</div>
<div class="t" style="left:852px;top:269px;font-size:20.5px;letter-spacing:-0.45px;color:#000">202400000001</div>
<div class="t" style="left:1040px;top:269px;font-size:20px;letter-spacing:2px;color:#000">徐某某</div>
<div class="t" style="left:1151px;top:270px;font-size:19.5px;color:#000"><span style="display:inline-block;width:11.25px;text-align:center">.</span><span style="display:inline-block;width:11.25px;height:19px;vertical-align:top;position:relative"><svg style="left:0;top:0" width="12" height="19" viewBox="0 0 12 19"><path d="M3.6 15.4 L13.4 1.8" stroke="#000" stroke-width="1.15"/></svg></span><span style="display:inline-block;width:11.25px;text-align:center">l</span><span style="display:inline-block;width:11.25px;text-align:center">o</span><span style="display:inline-block;width:11.25px;text-align:center">g</span><span style="display:inline-block;width:11.25px;text-align:center">o</span><span style="display:inline-block;width:11.25px;height:19px;vertical-align:top;position:relative"><svg style="left:0;top:0" width="12" height="19" viewBox="0 0 12 19"><path d="M3.6 15.4 L13.4 1.8" stroke="#000" stroke-width="1.15"/></svg></span><span style="display:inline-block;width:11.25px;text-align:center">l</span><span style="display:inline-block;width:11.25px;text-align:center">o</span><span style="display:inline-block;width:11.25px;text-align:center">g</span><span style="display:inline-block;width:11.25px;text-align:center">o</span><span style="display:inline-block;width:11.25px;text-align:center">.</span><span style="display:inline-block;width:11.25px;text-align:center">p</span><span style="display:inline-block;width:11.25px;text-align:center">n</span><span style="display:inline-block;width:11.25px;text-align:center">g</span></div>
<div class="t" style="left:32px;top:297px;font-size:20px;letter-spacing:2px;color:#000">初中物理</div>
<div class="t" style="left:161px;top:297px;font-size:20px;letter-spacing:2px;color:#000">某某高新区实验初级中学</div>
<div class="t" style="left:579px;top:297px;font-size:20px;letter-spacing:2px;color:#000">李某某</div>
<div class="t" style="left:742px;top:297px;font-size:20px;letter-spacing:2px;color:#000">壹等奖</div>
<div class="t" style="left:852px;top:297px;font-size:20.5px;letter-spacing:-0.45px;color:#000">202400000002</div>
<div class="t" style="left:1040px;top:297px;font-size:20px;letter-spacing:2px;color:#000">李某某</div>
<div class="t" style="left:1151px;top:298px;font-size:19.5px;color:#000"><span style="display:inline-block;width:11.25px;text-align:center">.</span><span style="display:inline-block;width:11.25px;height:19px;vertical-align:top;position:relative"><svg style="left:0;top:0" width="12" height="19" viewBox="0 0 12 19"><path d="M3.6 15.4 L13.4 1.8" stroke="#000" stroke-width="1.15"/></svg></span><span style="display:inline-block;width:11.25px;text-align:center">l</span><span style="display:inline-block;width:11.25px;text-align:center">o</span><span style="display:inline-block;width:11.25px;text-align:center">g</span><span style="display:inline-block;width:11.25px;text-align:center">o</span><span style="display:inline-block;width:11.25px;height:19px;vertical-align:top;position:relative"><svg style="left:0;top:0" width="12" height="19" viewBox="0 0 12 19"><path d="M3.6 15.4 L13.4 1.8" stroke="#000" stroke-width="1.15"/></svg></span><span style="display:inline-block;width:11.25px;text-align:center">l</span><span style="display:inline-block;width:11.25px;text-align:center">o</span><span style="display:inline-block;width:11.25px;text-align:center">g</span><span style="display:inline-block;width:11.25px;text-align:center">o</span><span style="display:inline-block;width:11.25px;text-align:center">1</span><span style="display:inline-block;width:11.25px;text-align:center">.</span><span style="display:inline-block;width:11.25px;text-align:center">p</span><span style="display:inline-block;width:11.25px;text-align:center">n</span><span style="display:inline-block;width:11.25px;text-align:center">g</span></div>
<div class="t" style="left:32px;top:325px;font-size:20px;letter-spacing:2px;color:#000">初中物理</div>
<div class="t" style="left:161px;top:325px;font-size:20px;letter-spacing:2px;color:#000">某某高新区第三中学校</div>
<div class="t" style="left:579px;top:325px;font-size:20px;letter-spacing:2px;color:#000">余某某</div>
<div class="t" style="left:742px;top:325px;font-size:20px;letter-spacing:2px;color:#000">壹等奖</div>
<div class="t" style="left:852px;top:325px;font-size:20.5px;letter-spacing:-0.45px;color:#000">202400000003</div>
<div class="t" style="left:1040px;top:325px;font-size:20px;letter-spacing:2px;color:#000">余某某</div>
<div class="t" style="left:1151px;top:326px;font-size:19.5px;color:#000"><span style="display:inline-block;width:11.25px;text-align:center">.</span><span style="display:inline-block;width:11.25px;height:19px;vertical-align:top;position:relative"><svg style="left:0;top:0" width="12" height="19" viewBox="0 0 12 19"><path d="M3.6 15.4 L13.4 1.8" stroke="#000" stroke-width="1.15"/></svg></span><span style="display:inline-block;width:11.25px;text-align:center">l</span><span style="display:inline-block;width:11.25px;text-align:center">o</span><span style="display:inline-block;width:11.25px;text-align:center">g</span><span style="display:inline-block;width:11.25px;text-align:center">o</span><span style="display:inline-block;width:11.25px;height:19px;vertical-align:top;position:relative"><svg style="left:0;top:0" width="12" height="19" viewBox="0 0 12 19"><path d="M3.6 15.4 L13.4 1.8" stroke="#000" stroke-width="1.15"/></svg></span><span style="display:inline-block;width:11.25px;text-align:center">l</span><span style="display:inline-block;width:11.25px;text-align:center">o</span><span style="display:inline-block;width:11.25px;text-align:center">g</span><span style="display:inline-block;width:11.25px;text-align:center">o</span><span style="display:inline-block;width:11.25px;text-align:center">.</span><span style="display:inline-block;width:11.25px;text-align:center">p</span><span style="display:inline-block;width:11.25px;text-align:center">n</span><span style="display:inline-block;width:11.25px;text-align:center">g</span></div>
<div class="t" style="left:32px;top:353px;font-size:20px;letter-spacing:2px;color:#000">初中物理</div>
<div class="t" style="left:161px;top:353px;font-size:20px;letter-spacing:2px;color:#000">某某高新区第五初级中学校</div>
<div class="t" style="left:579px;top:353px;font-size:20px;letter-spacing:2px;color:#000">吴某某</div>
<div class="t" style="left:742px;top:353px;font-size:20px;letter-spacing:2px;color:#000">贰等奖</div>
<div class="t" style="left:852px;top:353px;font-size:20.5px;letter-spacing:-0.45px;color:#000">202400000004</div>
<div class="t" style="left:1040px;top:353px;font-size:20px;letter-spacing:2px;color:#000">吴某某</div>
<div class="t" style="left:1151px;top:354px;font-size:19.5px;color:#000"><span style="display:inline-block;width:11.25px;text-align:center">.</span><span style="display:inline-block;width:11.25px;height:19px;vertical-align:top;position:relative"><svg style="left:0;top:0" width="12" height="19" viewBox="0 0 12 19"><path d="M3.6 15.4 L13.4 1.8" stroke="#000" stroke-width="1.15"/></svg></span><span style="display:inline-block;width:11.25px;text-align:center">l</span><span style="display:inline-block;width:11.25px;text-align:center">o</span><span style="display:inline-block;width:11.25px;text-align:center">g</span><span style="display:inline-block;width:11.25px;text-align:center">o</span><span style="display:inline-block;width:11.25px;height:19px;vertical-align:top;position:relative"><svg style="left:0;top:0" width="12" height="19" viewBox="0 0 12 19"><path d="M3.6 15.4 L13.4 1.8" stroke="#000" stroke-width="1.15"/></svg></span><span style="display:inline-block;width:11.25px;text-align:center">l</span><span style="display:inline-block;width:11.25px;text-align:center">o</span><span style="display:inline-block;width:11.25px;text-align:center">g</span><span style="display:inline-block;width:11.25px;text-align:center">o</span><span style="display:inline-block;width:11.25px;text-align:center">1</span><span style="display:inline-block;width:11.25px;text-align:center">.</span><span style="display:inline-block;width:11.25px;text-align:center">p</span><span style="display:inline-block;width:11.25px;text-align:center">n</span><span style="display:inline-block;width:11.25px;text-align:center">g</span></div>
<div class="t" style="left:32px;top:381px;font-size:20px;letter-spacing:2px;color:#000">初中物理</div>
<div class="t" style="left:161px;top:381px;font-size:20px;letter-spacing:2px;color:#000">某某高新区实验初级中学</div>
<div class="t" style="left:579px;top:381px;font-size:20px;letter-spacing:2px;color:#000">张某某</div>
<div class="t" style="left:742px;top:381px;font-size:20px;letter-spacing:2px;color:#000">贰等奖</div>
<div class="t" style="left:852px;top:381px;font-size:20.5px;letter-spacing:-0.45px;color:#000">202400000005</div>
<div class="t" style="left:1040px;top:381px;font-size:20px;letter-spacing:2px;color:#000">张某某</div>
<div class="t" style="left:1151px;top:382px;font-size:19.5px;color:#000"><span style="display:inline-block;width:11.25px;text-align:center">.</span><span style="display:inline-block;width:11.25px;height:19px;vertical-align:top;position:relative"><svg style="left:0;top:0" width="12" height="19" viewBox="0 0 12 19"><path d="M3.6 15.4 L13.4 1.8" stroke="#000" stroke-width="1.15"/></svg></span><span style="display:inline-block;width:11.25px;text-align:center">l</span><span style="display:inline-block;width:11.25px;text-align:center">o</span><span style="display:inline-block;width:11.25px;text-align:center">g</span><span style="display:inline-block;width:11.25px;text-align:center">o</span><span style="display:inline-block;width:11.25px;height:19px;vertical-align:top;position:relative"><svg style="left:0;top:0" width="12" height="19" viewBox="0 0 12 19"><path d="M3.6 15.4 L13.4 1.8" stroke="#000" stroke-width="1.15"/></svg></span><span style="display:inline-block;width:11.25px;text-align:center">l</span><span style="display:inline-block;width:11.25px;text-align:center">o</span><span style="display:inline-block;width:11.25px;text-align:center">g</span><span style="display:inline-block;width:11.25px;text-align:center">o</span><span style="display:inline-block;width:11.25px;text-align:center">.</span><span style="display:inline-block;width:11.25px;text-align:center">p</span><span style="display:inline-block;width:11.25px;text-align:center">n</span><span style="display:inline-block;width:11.25px;text-align:center">g</span></div>
<div class="t" style="left:32px;top:409px;font-size:20px;letter-spacing:2px;color:#000">小学美术</div>
<div class="t" style="left:161px;top:409px;font-size:20px;letter-spacing:2px;color:#000">某某高新区通安中心小学校</div>
<div class="t" style="left:579px;top:409px;font-size:20px;letter-spacing:2px;color:#000">田某某</div>
<div class="t" style="left:742px;top:409px;font-size:20px;letter-spacing:2px;color:#000">贰等奖</div>
<div class="t" style="left:852px;top:409px;font-size:20.5px;letter-spacing:-0.45px;color:#000">202400000006</div>
<div class="t" style="left:1040px;top:409px;font-size:20px;letter-spacing:2px;color:#000">田某某</div>
<div class="t" style="left:1151px;top:410px;font-size:19.5px;color:#000"><span style="display:inline-block;width:11.25px;text-align:center">.</span><span style="display:inline-block;width:11.25px;height:19px;vertical-align:top;position:relative"><svg style="left:0;top:0" width="12" height="19" viewBox="0 0 12 19"><path d="M3.6 15.4 L13.4 1.8" stroke="#000" stroke-width="1.15"/></svg></span><span style="display:inline-block;width:11.25px;text-align:center">l</span><span style="display:inline-block;width:11.25px;text-align:center">o</span><span style="display:inline-block;width:11.25px;text-align:center">g</span><span style="display:inline-block;width:11.25px;text-align:center">o</span><span style="display:inline-block;width:11.25px;height:19px;vertical-align:top;position:relative"><svg style="left:0;top:0" width="12" height="19" viewBox="0 0 12 19"><path d="M3.6 15.4 L13.4 1.8" stroke="#000" stroke-width="1.15"/></svg></span><span style="display:inline-block;width:11.25px;text-align:center">l</span><span style="display:inline-block;width:11.25px;text-align:center">o</span><span style="display:inline-block;width:11.25px;text-align:center">g</span><span style="display:inline-block;width:11.25px;text-align:center">o</span><span style="display:inline-block;width:11.25px;text-align:center">1</span><span style="display:inline-block;width:11.25px;text-align:center">.</span><span style="display:inline-block;width:11.25px;text-align:center">p</span><span style="display:inline-block;width:11.25px;text-align:center">n</span><span style="display:inline-block;width:11.25px;text-align:center">g</span></div>
<div class="t" style="left:32px;top:437px;font-size:20px;letter-spacing:2px;color:#000">小学美术</div>
<div class="t" style="left:161px;top:437px;font-size:20px;letter-spacing:2px;color:#000">某某高新区文星小学</div>
<div class="t" style="left:579px;top:437px;font-size:20px;letter-spacing:2px;color:#000">张某某</div>
<div class="t" style="left:742px;top:437px;font-size:20px;letter-spacing:2px;color:#000">壹等奖</div>
<div class="t" style="left:852px;top:437px;font-size:20.5px;letter-spacing:-0.45px;color:#000">202400000007</div>
<div class="t" style="left:1040px;top:437px;font-size:20px;letter-spacing:2px;color:#000">张某某</div>
<div class="t" style="left:1151px;top:438px;font-size:19.5px;color:#000"><span style="display:inline-block;width:11.25px;text-align:center">.</span><span style="display:inline-block;width:11.25px;height:19px;vertical-align:top;position:relative"><svg style="left:0;top:0" width="12" height="19" viewBox="0 0 12 19"><path d="M3.6 15.4 L13.4 1.8" stroke="#000" stroke-width="1.15"/></svg></span><span style="display:inline-block;width:11.25px;text-align:center">l</span><span style="display:inline-block;width:11.25px;text-align:center">o</span><span style="display:inline-block;width:11.25px;text-align:center">g</span><span style="display:inline-block;width:11.25px;text-align:center">o</span><span style="display:inline-block;width:11.25px;height:19px;vertical-align:top;position:relative"><svg style="left:0;top:0" width="12" height="19" viewBox="0 0 12 19"><path d="M3.6 15.4 L13.4 1.8" stroke="#000" stroke-width="1.15"/></svg></span><span style="display:inline-block;width:11.25px;text-align:center">l</span><span style="display:inline-block;width:11.25px;text-align:center">o</span><span style="display:inline-block;width:11.25px;text-align:center">g</span><span style="display:inline-block;width:11.25px;text-align:center">o</span><span style="display:inline-block;width:11.25px;text-align:center">.</span><span style="display:inline-block;width:11.25px;text-align:center">p</span><span style="display:inline-block;width:11.25px;text-align:center">n</span><span style="display:inline-block;width:11.25px;text-align:center">g</span></div>
<div class="t" style="left:32px;top:465px;font-size:20px;letter-spacing:2px;color:#000">小学美术</div>
<div class="t" style="left:161px;top:465px;font-size:20px;letter-spacing:2px;color:#000">某某高新区实验小学</div>
<div class="t" style="left:579px;top:465px;font-size:20px;letter-spacing:2px;color:#000">周某某</div>
<div class="t" style="left:742px;top:465px;font-size:20px;letter-spacing:2px;color:#000">壹等奖</div>
<div class="t" style="left:852px;top:465px;font-size:20.5px;letter-spacing:-0.45px;color:#000">202400000008</div>
<div class="t" style="left:1040px;top:465px;font-size:20px;letter-spacing:2px;color:#000">周某某</div>
<div class="t" style="left:1151px;top:466px;font-size:19.5px;color:#000"><span style="display:inline-block;width:11.25px;text-align:center">.</span><span style="display:inline-block;width:11.25px;height:19px;vertical-align:top;position:relative"><svg style="left:0;top:0" width="12" height="19" viewBox="0 0 12 19"><path d="M3.6 15.4 L13.4 1.8" stroke="#000" stroke-width="1.15"/></svg></span><span style="display:inline-block;width:11.25px;text-align:center">l</span><span style="display:inline-block;width:11.25px;text-align:center">o</span><span style="display:inline-block;width:11.25px;text-align:center">g</span><span style="display:inline-block;width:11.25px;text-align:center">o</span><span style="display:inline-block;width:11.25px;height:19px;vertical-align:top;position:relative"><svg style="left:0;top:0" width="12" height="19" viewBox="0 0 12 19"><path d="M3.6 15.4 L13.4 1.8" stroke="#000" stroke-width="1.15"/></svg></span><span style="display:inline-block;width:11.25px;text-align:center">l</span><span style="display:inline-block;width:11.25px;text-align:center">o</span><span style="display:inline-block;width:11.25px;text-align:center">g</span><span style="display:inline-block;width:11.25px;text-align:center">o</span><span style="display:inline-block;width:11.25px;text-align:center">1</span><span style="display:inline-block;width:11.25px;text-align:center">.</span><span style="display:inline-block;width:11.25px;text-align:center">p</span><span style="display:inline-block;width:11.25px;text-align:center">n</span><span style="display:inline-block;width:11.25px;text-align:center">g</span></div>
<div class="t" style="left:32px;top:493px;font-size:20px;letter-spacing:2px;color:#000">小学美术</div>
<div class="t" style="left:161px;top:493px;font-size:20px;letter-spacing:2px;color:#000">某某高新区狮山实验小学</div>
<div class="t" style="left:579px;top:493px;font-size:20px;letter-spacing:2px;color:#000">孙某某</div>
<div class="t" style="left:742px;top:493px;font-size:20px;letter-spacing:2px;color:#000">特等奖</div>
<div class="t" style="left:852px;top:493px;font-size:20.5px;letter-spacing:-0.45px;color:#000">202400000009</div>
<div class="t" style="left:1040px;top:493px;font-size:20px;letter-spacing:2px;color:#000">孙某某</div>
<div class="t" style="left:1151px;top:494px;font-size:19.5px;color:#000"><span style="display:inline-block;width:11.25px;text-align:center">.</span><span style="display:inline-block;width:11.25px;height:19px;vertical-align:top;position:relative"><svg style="left:0;top:0" width="12" height="19" viewBox="0 0 12 19"><path d="M3.6 15.4 L13.4 1.8" stroke="#000" stroke-width="1.15"/></svg></span><span style="display:inline-block;width:11.25px;text-align:center">l</span><span style="display:inline-block;width:11.25px;text-align:center">o</span><span style="display:inline-block;width:11.25px;text-align:center">g</span><span style="display:inline-block;width:11.25px;text-align:center">o</span><span style="display:inline-block;width:11.25px;height:19px;vertical-align:top;position:relative"><svg style="left:0;top:0" width="12" height="19" viewBox="0 0 12 19"><path d="M3.6 15.4 L13.4 1.8" stroke="#000" stroke-width="1.15"/></svg></span><span style="display:inline-block;width:11.25px;text-align:center">l</span><span style="display:inline-block;width:11.25px;text-align:center">o</span><span style="display:inline-block;width:11.25px;text-align:center">g</span><span style="display:inline-block;width:11.25px;text-align:center">o</span><span style="display:inline-block;width:11.25px;text-align:center">.</span><span style="display:inline-block;width:11.25px;text-align:center">p</span><span style="display:inline-block;width:11.25px;text-align:center">n</span><span style="display:inline-block;width:11.25px;text-align:center">g</span></div>
<div class="t" style="left:32px;top:521px;font-size:20px;letter-spacing:2px;color:#000">小学美术</div>
<div class="t" style="left:161px;top:521px;font-size:20px;letter-spacing:2px;color:#000">某某科技城实验小学校</div>
<div class="t" style="left:579px;top:521px;font-size:20px;letter-spacing:2px;color:#000">马某某</div>
<div class="t" style="left:742px;top:521px;font-size:20px;letter-spacing:2px;color:#000">贰等奖</div>
<div class="t" style="left:852px;top:521px;font-size:20.5px;letter-spacing:-0.45px;color:#000">202400000010</div>
<div class="t" style="left:1040px;top:521px;font-size:20px;letter-spacing:2px;color:#000">马某某</div>
<div class="t" style="left:1151px;top:522px;font-size:19.5px;color:#000"><span style="display:inline-block;width:11.25px;text-align:center">.</span><span style="display:inline-block;width:11.25px;height:19px;vertical-align:top;position:relative"><svg style="left:0;top:0" width="12" height="19" viewBox="0 0 12 19"><path d="M3.6 15.4 L13.4 1.8" stroke="#000" stroke-width="1.15"/></svg></span><span style="display:inline-block;width:11.25px;text-align:center">l</span><span style="display:inline-block;width:11.25px;text-align:center">o</span><span style="display:inline-block;width:11.25px;text-align:center">g</span><span style="display:inline-block;width:11.25px;text-align:center">o</span><span style="display:inline-block;width:11.25px;height:19px;vertical-align:top;position:relative"><svg style="left:0;top:0" width="12" height="19" viewBox="0 0 12 19"><path d="M3.6 15.4 L13.4 1.8" stroke="#000" stroke-width="1.15"/></svg></span><span style="display:inline-block;width:11.25px;text-align:center">l</span><span style="display:inline-block;width:11.25px;text-align:center">o</span><span style="display:inline-block;width:11.25px;text-align:center">g</span><span style="display:inline-block;width:11.25px;text-align:center">o</span><span style="display:inline-block;width:11.25px;text-align:center">1</span><span style="display:inline-block;width:11.25px;text-align:center">.</span><span style="display:inline-block;width:11.25px;text-align:center">p</span><span style="display:inline-block;width:11.25px;text-align:center">n</span><span style="display:inline-block;width:11.25px;text-align:center">g</span></div>
<div class="t" style="left:32px;top:549px;font-size:20px;letter-spacing:2px;color:#000">小学数学</div>
<div class="t" style="left:161px;top:549px;font-size:20px;letter-spacing:2px;color:#000">某某科技城实验小学校</div>
<div class="t" style="left:579px;top:549px;font-size:20px;letter-spacing:2px;color:#000">张某某</div>
<div class="t" style="left:742px;top:549px;font-size:20px;letter-spacing:2px;color:#000">特等奖</div>
<div class="t" style="left:852px;top:549px;font-size:20.5px;letter-spacing:-0.45px;color:#000">202400000011</div>
<div class="t" style="left:1040px;top:549px;font-size:20px;letter-spacing:2px;color:#000">张某某</div>
<div class="t" style="left:1151px;top:550px;font-size:19.5px;color:#000"><span style="display:inline-block;width:11.25px;text-align:center">.</span><span style="display:inline-block;width:11.25px;height:19px;vertical-align:top;position:relative"><svg style="left:0;top:0" width="12" height="19" viewBox="0 0 12 19"><path d="M3.6 15.4 L13.4 1.8" stroke="#000" stroke-width="1.15"/></svg></span><span style="display:inline-block;width:11.25px;text-align:center">l</span><span style="display:inline-block;width:11.25px;text-align:center">o</span><span style="display:inline-block;width:11.25px;text-align:center">g</span><span style="display:inline-block;width:11.25px;text-align:center">o</span><span style="display:inline-block;width:11.25px;height:19px;vertical-align:top;position:relative"><svg style="left:0;top:0" width="12" height="19" viewBox="0 0 12 19"><path d="M3.6 15.4 L13.4 1.8" stroke="#000" stroke-width="1.15"/></svg></span><span style="display:inline-block;width:11.25px;text-align:center">l</span><span style="display:inline-block;width:11.25px;text-align:center">o</span><span style="display:inline-block;width:11.25px;text-align:center">g</span><span style="display:inline-block;width:11.25px;text-align:center">o</span><span style="display:inline-block;width:11.25px;text-align:center">.</span><span style="display:inline-block;width:11.25px;text-align:center">p</span><span style="display:inline-block;width:11.25px;text-align:center">n</span><span style="display:inline-block;width:11.25px;text-align:center">g</span></div>
<div class="t" style="left:32px;top:577px;font-size:20px;letter-spacing:2px;color:#000">小学数学</div>
<div class="t" style="left:161px;top:577px;font-size:20px;letter-spacing:2px;color:#000">某某高新区实验小学校</div>
<div class="t" style="left:579px;top:577px;font-size:20px;letter-spacing:2px;color:#000">火某某</div>
<div class="t" style="left:742px;top:577px;font-size:20px;letter-spacing:2px;color:#000">壹等奖</div>
<div class="t" style="left:852px;top:577px;font-size:20.5px;letter-spacing:-0.45px;color:#000">202400000012</div>
<div class="t" style="left:1040px;top:577px;font-size:20px;letter-spacing:2px;color:#000">火某某</div>
<div class="t" style="left:1151px;top:578px;font-size:19.5px;color:#000"><span style="display:inline-block;width:11.25px;text-align:center">.</span><span style="display:inline-block;width:11.25px;height:19px;vertical-align:top;position:relative"><svg style="left:0;top:0" width="12" height="19" viewBox="0 0 12 19"><path d="M3.6 15.4 L13.4 1.8" stroke="#000" stroke-width="1.15"/></svg></span><span style="display:inline-block;width:11.25px;text-align:center">l</span><span style="display:inline-block;width:11.25px;text-align:center">o</span><span style="display:inline-block;width:11.25px;text-align:center">g</span><span style="display:inline-block;width:11.25px;text-align:center">o</span><span style="display:inline-block;width:11.25px;height:19px;vertical-align:top;position:relative"><svg style="left:0;top:0" width="12" height="19" viewBox="0 0 12 19"><path d="M3.6 15.4 L13.4 1.8" stroke="#000" stroke-width="1.15"/></svg></span><span style="display:inline-block;width:11.25px;text-align:center">l</span><span style="display:inline-block;width:11.25px;text-align:center">o</span><span style="display:inline-block;width:11.25px;text-align:center">g</span><span style="display:inline-block;width:11.25px;text-align:center">o</span><span style="display:inline-block;width:11.25px;text-align:center">1</span><span style="display:inline-block;width:11.25px;text-align:center">.</span><span style="display:inline-block;width:11.25px;text-align:center">p</span><span style="display:inline-block;width:11.25px;text-align:center">n</span><span style="display:inline-block;width:11.25px;text-align:center">g</span></div>
<div class="t" style="left:32px;top:605px;font-size:20px;letter-spacing:2px;color:#000">小学数学</div>
<div class="t" style="left:161px;top:605px;font-size:20px;letter-spacing:2px;color:#000">某某高新区东渚实验小学校</div>
<div class="t" style="left:579px;top:605px;font-size:20px;letter-spacing:2px;color:#000">陆某某</div>
<div class="t" style="left:742px;top:605px;font-size:20px;letter-spacing:2px;color:#000">贰等奖</div>
<div class="t" style="left:852px;top:605px;font-size:20.5px;letter-spacing:-0.45px;color:#000">202400000013</div>
<div class="t" style="left:1040px;top:605px;font-size:20px;letter-spacing:2px;color:#000">陆某某</div>
<div class="t" style="left:1151px;top:606px;font-size:19.5px;color:#000"><span style="display:inline-block;width:11.25px;text-align:center">.</span><span style="display:inline-block;width:11.25px;height:19px;vertical-align:top;position:relative"><svg style="left:0;top:0" width="12" height="19" viewBox="0 0 12 19"><path d="M3.6 15.4 L13.4 1.8" stroke="#000" stroke-width="1.15"/></svg></span><span style="display:inline-block;width:11.25px;text-align:center">l</span><span style="display:inline-block;width:11.25px;text-align:center">o</span><span style="display:inline-block;width:11.25px;text-align:center">g</span><span style="display:inline-block;width:11.25px;text-align:center">o</span><span style="display:inline-block;width:11.25px;height:19px;vertical-align:top;position:relative"><svg style="left:0;top:0" width="12" height="19" viewBox="0 0 12 19"><path d="M3.6 15.4 L13.4 1.8" stroke="#000" stroke-width="1.15"/></svg></span><span style="display:inline-block;width:11.25px;text-align:center">l</span><span style="display:inline-block;width:11.25px;text-align:center">o</span><span style="display:inline-block;width:11.25px;text-align:center">g</span><span style="display:inline-block;width:11.25px;text-align:center">o</span><span style="display:inline-block;width:11.25px;text-align:center">.</span><span style="display:inline-block;width:11.25px;text-align:center">p</span><span style="display:inline-block;width:11.25px;text-align:center">n</span><span style="display:inline-block;width:11.25px;text-align:center">g</span></div>
<div class="t" style="left:32px;top:633px;font-size:20px;letter-spacing:2px;color:#000">小学数学</div>
<div class="t" style="left:161px;top:633px;font-size:20px;letter-spacing:2px;color:#000">某某高新区秦馀小学校</div>
<div class="t" style="left:579px;top:633px;font-size:20px;letter-spacing:2px;color:#000">徐某某</div>
<div class="t" style="left:742px;top:633px;font-size:20px;letter-spacing:2px;color:#000">贰等奖</div>
<div class="t" style="left:852px;top:633px;font-size:20.5px;letter-spacing:-0.45px;color:#000">202400000014</div>
<div class="t" style="left:1040px;top:633px;font-size:20px;letter-spacing:2px;color:#000">徐某某</div>
<div class="t" style="left:1151px;top:634px;font-size:19.5px;color:#000"><span style="display:inline-block;width:11.25px;text-align:center">.</span><span style="display:inline-block;width:11.25px;height:19px;vertical-align:top;position:relative"><svg style="left:0;top:0" width="12" height="19" viewBox="0 0 12 19"><path d="M3.6 15.4 L13.4 1.8" stroke="#000" stroke-width="1.15"/></svg></span><span style="display:inline-block;width:11.25px;text-align:center">l</span><span style="display:inline-block;width:11.25px;text-align:center">o</span><span style="display:inline-block;width:11.25px;text-align:center">g</span><span style="display:inline-block;width:11.25px;text-align:center">o</span><span style="display:inline-block;width:11.25px;height:19px;vertical-align:top;position:relative"><svg style="left:0;top:0" width="12" height="19" viewBox="0 0 12 19"><path d="M3.6 15.4 L13.4 1.8" stroke="#000" stroke-width="1.15"/></svg></span><span style="display:inline-block;width:11.25px;text-align:center">l</span><span style="display:inline-block;width:11.25px;text-align:center">o</span><span style="display:inline-block;width:11.25px;text-align:center">g</span><span style="display:inline-block;width:11.25px;text-align:center">o</span><span style="display:inline-block;width:11.25px;text-align:center">1</span><span style="display:inline-block;width:11.25px;text-align:center">.</span><span style="display:inline-block;width:11.25px;text-align:center">p</span><span style="display:inline-block;width:11.25px;text-align:center">n</span><span style="display:inline-block;width:11.25px;text-align:center">g</span></div>
<div class="t" style="left:32px;top:661px;font-size:20px;letter-spacing:2px;color:#000">小学数学</div>
<div class="t" style="left:161px;top:661px;font-size:20px;letter-spacing:2px;color:#000">某某高新区白马涧小学</div>
<div class="t" style="left:579px;top:661px;font-size:20px;letter-spacing:2px;color:#000">许某某</div>
<div class="t" style="left:742px;top:661px;font-size:20px;letter-spacing:2px;color:#000">壹等奖</div>
<div class="t" style="left:852px;top:661px;font-size:20.5px;letter-spacing:-0.45px;color:#000">202400000015</div>
<div class="t" style="left:1040px;top:661px;font-size:20px;letter-spacing:2px;color:#000">许某某</div>
<div class="t" style="left:1151px;top:662px;font-size:19.5px;color:#000"><span style="display:inline-block;width:11.25px;text-align:center">.</span><span style="display:inline-block;width:11.25px;height:19px;vertical-align:top;position:relative"><svg style="left:0;top:0" width="12" height="19" viewBox="0 0 12 19"><path d="M3.6 15.4 L13.4 1.8" stroke="#000" stroke-width="1.15"/></svg></span><span style="display:inline-block;width:11.25px;text-align:center">l</span><span style="display:inline-block;width:11.25px;text-align:center">o</span><span style="display:inline-block;width:11.25px;text-align:center">g</span><span style="display:inline-block;width:11.25px;text-align:center">o</span><span style="display:inline-block;width:11.25px;height:19px;vertical-align:top;position:relative"><svg style="left:0;top:0" width="12" height="19" viewBox="0 0 12 19"><path d="M3.6 15.4 L13.4 1.8" stroke="#000" stroke-width="1.15"/></svg></span><span style="display:inline-block;width:11.25px;text-align:center">l</span><span style="display:inline-block;width:11.25px;text-align:center">o</span><span style="display:inline-block;width:11.25px;text-align:center">g</span><span style="display:inline-block;width:11.25px;text-align:center">o</span><span style="display:inline-block;width:11.25px;text-align:center">.</span><span style="display:inline-block;width:11.25px;text-align:center">p</span><span style="display:inline-block;width:11.25px;text-align:center">n</span><span style="display:inline-block;width:11.25px;text-align:center">g</span></div>
<div class="t" style="left:32px;top:689px;font-size:20px;letter-spacing:2px;color:#000">初中英语</div>
<div class="t" style="left:161px;top:689px;font-size:20px;letter-spacing:2px;color:#000">某某高新区实验初级中学</div>
<div class="t" style="left:579px;top:689px;font-size:20px;letter-spacing:2px;color:#000">郭某某</div>
<div class="t" style="left:742px;top:689px;font-size:20px;letter-spacing:2px;color:#000">特等奖</div>
<div class="t" style="left:852px;top:689px;font-size:20.5px;letter-spacing:-0.45px;color:#000">202400000016</div>
<div class="t" style="left:1040px;top:689px;font-size:20px;letter-spacing:2px;color:#000">郭某某</div>
<div class="t" style="left:1151px;top:690px;font-size:19.5px;color:#000"><span style="display:inline-block;width:11.25px;text-align:center">.</span><span style="display:inline-block;width:11.25px;height:19px;vertical-align:top;position:relative"><svg style="left:0;top:0" width="12" height="19" viewBox="0 0 12 19"><path d="M3.6 15.4 L13.4 1.8" stroke="#000" stroke-width="1.15"/></svg></span><span style="display:inline-block;width:11.25px;text-align:center">l</span><span style="display:inline-block;width:11.25px;text-align:center">o</span><span style="display:inline-block;width:11.25px;text-align:center">g</span><span style="display:inline-block;width:11.25px;text-align:center">o</span><span style="display:inline-block;width:11.25px;height:19px;vertical-align:top;position:relative"><svg style="left:0;top:0" width="12" height="19" viewBox="0 0 12 19"><path d="M3.6 15.4 L13.4 1.8" stroke="#000" stroke-width="1.15"/></svg></span><span style="display:inline-block;width:11.25px;text-align:center">l</span><span style="display:inline-block;width:11.25px;text-align:center">o</span><span style="display:inline-block;width:11.25px;text-align:center">g</span><span style="display:inline-block;width:11.25px;text-align:center">o</span><span style="display:inline-block;width:11.25px;text-align:center">1</span><span style="display:inline-block;width:11.25px;text-align:center">.</span><span style="display:inline-block;width:11.25px;text-align:center">p</span><span style="display:inline-block;width:11.25px;text-align:center">n</span><span style="display:inline-block;width:11.25px;text-align:center">g</span></div>
<div class="t" style="left:32px;top:717px;font-size:20px;letter-spacing:2px;color:#000">初中英语</div>
<div class="t" style="left:161px;top:717px;font-size:20px;letter-spacing:2px;color:#000">某某科技城外国语学校</div>
<div class="t" style="left:579px;top:717px;font-size:20px;letter-spacing:2px;color:#000">张某某</div>
<div class="t" style="left:742px;top:717px;font-size:20px;letter-spacing:2px;color:#000">壹等奖</div>
<div class="t" style="left:852px;top:717px;font-size:20.5px;letter-spacing:-0.45px;color:#000">202400000017</div>
<div class="t" style="left:1040px;top:717px;font-size:20px;letter-spacing:2px;color:#000">张某某</div>
<div class="t" style="left:1151px;top:718px;font-size:19.5px;color:#000"><span style="display:inline-block;width:11.25px;text-align:center">.</span><span style="display:inline-block;width:11.25px;height:19px;vertical-align:top;position:relative"><svg style="left:0;top:0" width="12" height="19" viewBox="0 0 12 19"><path d="M3.6 15.4 L13.4 1.8" stroke="#000" stroke-width="1.15"/></svg></span><span style="display:inline-block;width:11.25px;text-align:center">l</span><span style="display:inline-block;width:11.25px;text-align:center">o</span><span style="display:inline-block;width:11.25px;text-align:center">g</span><span style="display:inline-block;width:11.25px;text-align:center">o</span><span style="display:inline-block;width:11.25px;height:19px;vertical-align:top;position:relative"><svg style="left:0;top:0" width="12" height="19" viewBox="0 0 12 19"><path d="M3.6 15.4 L13.4 1.8" stroke="#000" stroke-width="1.15"/></svg></span><span style="display:inline-block;width:11.25px;text-align:center">l</span><span style="display:inline-block;width:11.25px;text-align:center">o</span><span style="display:inline-block;width:11.25px;text-align:center">g</span><span style="display:inline-block;width:11.25px;text-align:center">o</span><span style="display:inline-block;width:11.25px;text-align:center">.</span><span style="display:inline-block;width:11.25px;text-align:center">p</span><span style="display:inline-block;width:11.25px;text-align:center">n</span><span style="display:inline-block;width:11.25px;text-align:center">g</span></div>
<div class="t" style="left:32px;top:745px;font-size:20px;letter-spacing:2px;color:#000">初中英语</div>
<div class="t" style="left:161px;top:745px;font-size:20px;letter-spacing:2px;color:#000">某某学府中学校</div>
<div class="t" style="left:579px;top:745px;font-size:20px;letter-spacing:2px;color:#000">徐某某</div>
<div class="t" style="left:742px;top:745px;font-size:20px;letter-spacing:2px;color:#000">贰等奖</div>
<div class="t" style="left:852px;top:745px;font-size:20.5px;letter-spacing:-0.45px;color:#000">202400000018</div>
<div class="t" style="left:1040px;top:745px;font-size:20px;letter-spacing:2px;color:#000">徐某某</div>
<div class="t" style="left:1151px;top:746px;font-size:19.5px;color:#000"><span style="display:inline-block;width:11.25px;text-align:center">.</span><span style="display:inline-block;width:11.25px;height:19px;vertical-align:top;position:relative"><svg style="left:0;top:0" width="12" height="19" viewBox="0 0 12 19"><path d="M3.6 15.4 L13.4 1.8" stroke="#000" stroke-width="1.15"/></svg></span><span style="display:inline-block;width:11.25px;text-align:center">l</span><span style="display:inline-block;width:11.25px;text-align:center">o</span><span style="display:inline-block;width:11.25px;text-align:center">g</span><span style="display:inline-block;width:11.25px;text-align:center">o</span><span style="display:inline-block;width:11.25px;height:19px;vertical-align:top;position:relative"><svg style="left:0;top:0" width="12" height="19" viewBox="0 0 12 19"><path d="M3.6 15.4 L13.4 1.8" stroke="#000" stroke-width="1.15"/></svg></span><span style="display:inline-block;width:11.25px;text-align:center">l</span><span style="display:inline-block;width:11.25px;text-align:center">o</span><span style="display:inline-block;width:11.25px;text-align:center">g</span><span style="display:inline-block;width:11.25px;text-align:center">o</span><span style="display:inline-block;width:11.25px;text-align:center">1</span><span style="display:inline-block;width:11.25px;text-align:center">.</span><span style="display:inline-block;width:11.25px;text-align:center">p</span><span style="display:inline-block;width:11.25px;text-align:center">n</span><span style="display:inline-block;width:11.25px;text-align:center">g</span></div>
<div class="t" style="left:32px;top:773px;font-size:20px;letter-spacing:2px;color:#000">初中英语</div>
<div class="t" style="left:161px;top:773px;font-size:20px;letter-spacing:2px;color:#000">某某高新区第三中学校</div>
<div class="t" style="left:579px;top:773px;font-size:20px;letter-spacing:2px;color:#000">李某某</div>
<div class="t" style="left:742px;top:773px;font-size:20px;letter-spacing:2px;color:#000">贰等奖</div>
<div class="t" style="left:852px;top:773px;font-size:20.5px;letter-spacing:-0.45px;color:#000">202400000019</div>
<div class="t" style="left:1040px;top:773px;font-size:20px;letter-spacing:2px;color:#000">李某某</div>
<div class="t" style="left:1151px;top:774px;font-size:19.5px;color:#000"><span style="display:inline-block;width:11.25px;text-align:center">.</span><span style="display:inline-block;width:11.25px;height:19px;vertical-align:top;position:relative"><svg style="left:0;top:0" width="12" height="19" viewBox="0 0 12 19"><path d="M3.6 15.4 L13.4 1.8" stroke="#000" stroke-width="1.15"/></svg></span><span style="display:inline-block;width:11.25px;text-align:center">l</span><span style="display:inline-block;width:11.25px;text-align:center">o</span><span style="display:inline-block;width:11.25px;text-align:center">g</span><span style="display:inline-block;width:11.25px;text-align:center">o</span><span style="display:inline-block;width:11.25px;height:19px;vertical-align:top;position:relative"><svg style="left:0;top:0" width="12" height="19" viewBox="0 0 12 19"><path d="M3.6 15.4 L13.4 1.8" stroke="#000" stroke-width="1.15"/></svg></span><span style="display:inline-block;width:11.25px;text-align:center">l</span><span style="display:inline-block;width:11.25px;text-align:center">o</span><span style="display:inline-block;width:11.25px;text-align:center">g</span><span style="display:inline-block;width:11.25px;text-align:center">o</span><span style="display:inline-block;width:11.25px;text-align:center">.</span><span style="display:inline-block;width:11.25px;text-align:center">p</span><span style="display:inline-block;width:11.25px;text-align:center">n</span><span style="display:inline-block;width:11.25px;text-align:center">g</span></div>
<div class="a" style="left:22px;top:236px;width:1293px;height:33px;border:7px solid #fc3838"></div>
<svg style="left:0;top:0" width="1920" height="1032" viewBox="0 0 1920 1032"><path d="M1143.2 276.2 L1160.0 281.9 L1156.3 282.8 L1552.4 671.1 L1551.6 671.9 L1150.3 289.0 L1149.4 292.8 Z" fill="#fc3838"/></svg>
<div class="a" style="left:1901px;top:226px;width:17px;height:752px;background:#f7f7f7;border-radius:8px"></div>
<svg style="left:1904px;top:229px" width="11" height="9" viewBox="0 0 11 9"><path d="M5.5 1 L10 8 L1 8 Z" fill="#707070" stroke="#707070" stroke-linejoin="round"/></svg>
<div class="a" style="left:1905px;top:242px;width:10px;height:712px;background:#707070;border-radius:5px"></div>
<svg style="left:1904px;top:967px" width="11" height="9" viewBox="0 0 11 9"><path d="M1 1 L10 1 L5.5 8 Z" fill="#707070" stroke="#707070" stroke-linejoin="round"/></svg>
<svg style="left:28px;top:986px" width="8" height="12" viewBox="0 0 8 12" fill="none" stroke="#9a9a9a" stroke-width="1.1"><path d="M6.5 1 L1.5 6 L6.5 11"/></svg>
<svg style="left:60px;top:986px" width="8" height="12" viewBox="0 0 8 12" fill="none" stroke="#9a9a9a" stroke-width="1.1"><path d="M1.5 1 L6.5 6 L1.5 11"/></svg>
<div class="a" style="left:100px;top:977px;width:100px;height:10px;background:#fff"></div>
<div class="a" style="left:90px;top:977px;width:26px;height:32px;background:#f0f0f0;border-top-right-radius:5px"></div>
<div class="a" style="left:181px;top:977px;width:30px;height:32px;background:#f0f0f0;border-top-left-radius:5px"></div>
<div class="a" style="left:116px;top:977px;width:65px;height:28px;background:#fff;border-radius:0 0 5px 5px;box-shadow:0 1px 1px rgba(0,0,0,0.08)"></div>
<div class="t" style="left:125px;top:982px;font-size:15px;letter-spacing:-0.2px;color:#333">Sheet1</div>
<div class="a" style="left:124px;top:1000px;width:49px;height:2px;background:#107c41"></div>
<div class="a" style="left:185px;top:984px;width:1px;height:17px;background:#cfcfcf"></div>
<svg style="left:227px;top:986px" width="13" height="13" viewBox="0 0 13 13" fill="none" stroke="#444" stroke-width="1.1"><path d="M6.5 0.5 V12.5 M0.5 6.5 H12.5"/></svg>
<div class="a" style="left:1153.5px;top:989px;width:2.6px;height:2.6px;background:#222;border-radius:0.5px"></div>
<div class="a" style="left:1153.5px;top:993px;width:2.6px;height:2.6px;background:#222;border-radius:0.5px"></div>
<div class="a" style="left:1153.5px;top:997px;width:2.6px;height:2.6px;background:#222;border-radius:0.5px"></div>
<div class="a" style="left:1171px;top:983px;width:732px;height:17px;background:#f7f7f7;border-radius:8px"></div>
<svg style="left:1175px;top:987px" width="9" height="11" viewBox="0 0 9 11"><path d="M1 5.5 L8 1 L8 10 Z" fill="#707070" stroke="#707070" stroke-linejoin="round"/></svg>
<div class="a" style="left:1188px;top:988px;width:674px;height:9px;background:#707070;border-radius:5px"></div>
<svg style="left:1889px;top:987px" width="9" height="11" viewBox="0 0 9 11"><path d="M1 1 L8 5.5 L1 10 Z" fill="#707070" stroke="#707070" stroke-linejoin="round"/></svg>
<div class="a" style="left:0;top:1009px;width:1920px;height:23px;background:#f3f3f3;border-top:1px solid #fafafa;border-bottom:1px solid #bdb3ab"></div>
<div class="t" style="left:11px;top:1014px;font-size:13px;color:#222">就绪</div>
<svg style="left:50px;top:1008px" width="30" height="24" viewBox="0 0 30 24" fill="none" stroke="#222" stroke-width="1.1" stroke-linecap="round"><circle cx="10.9" cy="7" r="1.9"/><path d="M8.6 8.2 C6.5 7 4.5 7.3 5.2 9.2 C5.8 10.3 7.5 10.5 8.6 10.4 C8.3 13 7.8 15 7.2 17.5 C7 18.8 8.5 19 9 17.8 L10.5 14"/><path d="M13.2 8.2 C15.3 7 16.8 7.5 16.3 9.3 C15.8 10.5 14.5 10.6 13.4 10.6"/><path d="M12.5 12.3 L18.5 18.5 M18.5 12.3 L12.3 18.5"/><circle cx="10.9" cy="14.6" r="0.6" fill="#222"/></svg>
<div class="t" style="left:73px;top:1014px;font-size:12.5px;letter-spacing:-0.4px;color:#222">辅助功能: 调查</div>
<div class="a" style="left:1613px;top:1010px;width:40px;height:20px;background:#dadada"></div>
<svg style="left:1626px;top:1013px" width="14" height="14" viewBox="0 0 14 14" fill="none" stroke="#333" stroke-width="1.1"><rect x="0.5" y="0.5" width="13" height="13"/><path d="M4.8 0.5 V13.5 M9.2 0.5 V13.5 M0.5 4.8 H13.5 M0.5 9.2 H13.5"/></svg>
<svg style="left:1666px;top:1013px" width="15" height="14" viewBox="0 0 15 14" fill="none" stroke="#222" stroke-width="1.1"><rect x="0.6" y="0.6" width="13.2" height="12"/><rect x="3.6" y="2.6" width="7.2" height="8"/><path d="M5.3 4.6 H9 M5.3 6.6 H9 M5.3 8.6 H9"/></svg>
<svg style="left:1706px;top:1013px" width="15" height="14" viewBox="0 0 15 14" fill="none" stroke="#222" stroke-width="1.1"><rect x="0.6" y="0.6" width="13.2" height="12"/><path d="M0.6 7.3 H8.3 V0.6 M4.5 0.6 V7.3"/></svg>
<div class="a" style="left:1739px;top:1020px;width:8px;height:1px;background:#333"></div>
<div class="a" style="left:1752px;top:1020px;width:102px;height:1px;background:#666"></div>
<div class="a" style="left:1801px;top:1015px;width:4px;height:11px;background:#555"></div>
<svg style="left:1858px;top:1015px" width="10" height="10" viewBox="0 0 10 10" fill="none" stroke="#333" stroke-width="1"><path d="M5 0 V10 M0 5 H10"/></svg>
<div class="t" style="left:1880px;top:1013px;font-size:13.5px;color:#333">100%</div>
</body></html>
